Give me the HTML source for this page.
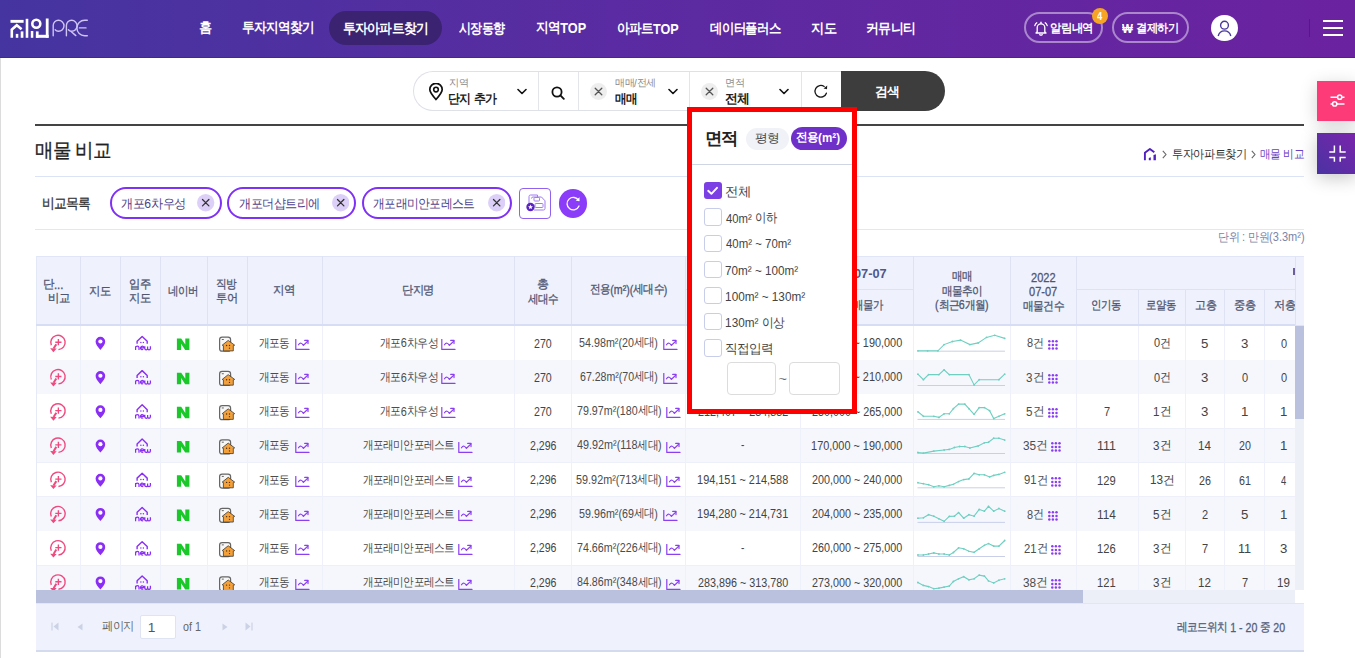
<!DOCTYPE html><html><head><meta charset="utf-8"><style>
html,body{margin:0;padding:0;}
body{width:1355px;height:658px;overflow:hidden;position:relative;background:#fff;font-family:"Liberation Sans", sans-serif;}
div{box-sizing:border-box;}
</style></head><body>
<div style="position:absolute;left:0px;top:58px;width:1px;height:600px;background:#dcdcdc"></div>
<div style="position:absolute;left:0px;top:0px;width:1355px;height:58px;background:linear-gradient(90deg,#4535a0 0%,#5a2ba2 45%,#6b22a0 100%)"></div>
<div style="position:absolute;left:0px;top:57px;width:1355px;height:1px;background:rgba(40,20,120,0.3)"></div>
<svg style="position:absolute;left:0px;top:0px;" width="100" height="58" viewBox="0 0 100 58">
<g fill="#fff">
<rect x="10.5" y="19.9" width="13.1" height="2.9"/>
<rect x="25.7" y="18.8" width="2.6" height="19" />
<rect x="30.8" y="31" width="2.5" height="6.8"/>
<rect x="45.8" y="18.5" width="2.8" height="19.3"/>
<rect x="35.9" y="34.8" width="12.7" height="3"/>
<rect x="35.9" y="31.4" width="2.7" height="6.4"/>
<rect x="15.8" y="33.9" width="2.5" height="3.9"/>
<rect x="20.7" y="31.4" width="2.7" height="6.4"/>
</g>
<path d="M11.8 37.8 V29.6 L16.8 25.2 L21.6 29.2" fill="none" stroke="#fff" stroke-width="2.6"/>
<circle cx="36.3" cy="23.8" r="4" fill="none" stroke="#fff" stroke-width="2.6"/>
<g fill="none" stroke="#cfc4f2" stroke-width="1.4" stroke-linecap="round">
<path d="M53.2 35.7 V25.5 A5.2 5.2 0 0 1 58.5 20.3 A5.5 5.5 0 0 1 58.5 31.3 A4 4 0 0 1 55.2 29.8"/>
<path d="M66.4 35.7 V25.5 A5.2 5.2 0 0 1 71.6 20.3 A5.5 5.5 0 0 1 71.6 31.3 A4 4 0 0 1 68.4 29.8 M70.8 31.2 L75.8 35.6"/>
<path d="M87.3 20.3 H84.6 A7.7 7.7 0 0 0 84.6 35.7 H87.3 M79.4 27.9 H86"/>
</g></svg>
<div style="position:absolute;left:329px;top:11px;width:113px;height:34px;background:#3b2372;border-radius:17px"></div>
<div style="position:absolute;left:199.00px;top:18.40px;white-space:nowrap;font-size:14px;line-height:18px;color:#fff;font-weight:bold;transform-origin:1.00px 50%;transform:scaleX(0.9417);--w:13;--s:0.9417;"><span style="letter-spacing:-0.700px">홈</span></div>
<div style="position:absolute;left:241.70px;top:18.40px;white-space:nowrap;font-size:14px;line-height:18px;color:#fff;font-weight:bold;transform-origin:1.00px 50%;transform:scaleX(0.9013);--w:80;--s:0.9013;"><span style="letter-spacing:-0.700px">투자지역찾기</span></div>
<div style="position:absolute;left:343.00px;top:18.90px;white-space:nowrap;font-size:14px;line-height:18px;color:#fff;font-weight:bold;transform-origin:1.00px 50%;transform:scaleX(0.9121);--w:93;--s:0.9121;"><span style="letter-spacing:-0.700px">투자아파트찾기</span></div>
<div style="position:absolute;left:458.50px;top:18.90px;white-space:nowrap;font-size:14px;line-height:18px;color:#fff;font-weight:bold;transform-origin:0.00px 50%;transform:scaleX(0.8611);--w:53;--s:0.8611;"><span style="letter-spacing:-0.700px">시장동향</span></div>
<div style="position:absolute;left:536.00px;top:18.40px;white-space:nowrap;font-size:14px;line-height:18px;color:#fff;font-weight:bold;transform-origin:1.00px 50%;transform:scaleX(0.9074);--w:55;--s:0.9074;"><span style="letter-spacing:-0.700px">지역</span><span style="position:relative;top:0.07em;letter-spacing:0.000px">TOP</span></div>
<div style="position:absolute;left:616.60px;top:18.90px;white-space:nowrap;font-size:14px;line-height:18px;color:#fff;font-weight:bold;transform-origin:1.00px 50%;transform:scaleX(0.9015);--w:68;--s:0.9015;"><span style="letter-spacing:-0.700px">아파트</span><span style="position:relative;top:0.07em;letter-spacing:0.000px">TOP</span></div>
<div style="position:absolute;left:709.70px;top:18.90px;white-space:nowrap;font-size:14px;line-height:18px;color:#fff;font-weight:bold;transform-origin:0.00px 50%;transform:scaleX(0.8837);--w:80;--s:0.8837;"><span style="letter-spacing:-0.700px">데이터플러스</span></div>
<div style="position:absolute;left:811.00px;top:18.90px;white-space:nowrap;font-size:14px;line-height:18px;color:#fff;font-weight:bold;transform-origin:1.00px 50%;transform:scaleX(0.9440);--w:27;--s:0.9440;"><span style="letter-spacing:-0.700px">지도</span></div>
<div style="position:absolute;left:865.60px;top:18.90px;white-space:nowrap;font-size:14px;line-height:18px;color:#fff;font-weight:bold;transform-origin:1.00px 50%;transform:scaleX(0.9235);--w:53;--s:0.9235;"><span style="letter-spacing:-0.700px">커뮤니티</span></div>
<div style="position:absolute;left:1024px;top:12px;width:79px;height:31px;border:2px solid rgba(255,255,255,0.45);border-radius:16px"></div>
<div style="position:absolute;left:1112px;top:12px;width:77px;height:31px;border:2px solid rgba(255,255,255,0.45);border-radius:16px"></div>
<svg style="position:absolute;left:1033px;top:20px;" width="16" height="16" viewBox="0 0 16 16"><g fill="none" stroke="#fff" stroke-width="1.3" stroke-linecap="round" stroke-linejoin="round"><path d="M4.2 11.8 V7.6 A3.8 3.8 0 0 1 11.8 7.6 V11.8 L13 13 H3 Z"/><path d="M8 2.2 V3.6"/><path d="M6.8 14.4 A1.3 1.3 0 0 0 9.2 14.4"/><path d="M1.8 5.6 Q2.4 3.8 3.8 2.8 M14.2 5.6 Q13.6 3.8 12.2 2.8"/></g></svg>
<div style="position:absolute;left:1050.00px;top:19.50px;white-space:nowrap;font-size:12px;line-height:16px;color:#fff;font-weight:bold;transform-origin:1.00px 50%;transform:scaleX(0.9477);--w:46;--s:0.9477;"><span style="letter-spacing:-0.600px">알림내역</span></div>
<div style="position:absolute;left:1092px;top:8px;width:16px;height:16px;background:#f6a425;border-radius:8px"></div>
<div style="position:absolute;left:1097.20px;top:10.00px;white-space:nowrap;font-size:10px;line-height:14px;color:#fff;font-weight:bold;transform-origin:0.00px 50%;transform:scaleX(0.9333);--w:6;--s:0.9333;"><span style="letter-spacing:0.000px">4</span></div>
<div style="position:absolute;left:1122.00px;top:20.50px;white-space:nowrap;font-size:12px;line-height:16px;color:#fff;font-weight:bold;transform-origin:0.00px 50%;transform:scaleX(0.9583);--w:11;--s:0.9583;"><span style="letter-spacing:0.000px">₩</span></div>
<div style="position:absolute;left:1135.80px;top:19.50px;white-space:nowrap;font-size:12px;line-height:16px;color:#fff;font-weight:bold;transform-origin:1.00px 50%;transform:scaleX(0.9364);--w:46;--s:0.9364;"><span style="letter-spacing:-0.600px">결제하기</span></div>
<div style="position:absolute;left:1211px;top:14.6px;width:26.7px;height:26.7px;background:#fff;border-radius:50%"></div>
<svg style="position:absolute;left:1211px;top:14.6px;" width="27" height="27" viewBox="0 0 27 27"><circle cx="13.5" cy="10.2" r="3.9" fill="none" stroke="#4a3a9c" stroke-width="1.4"/><path d="M7.2 21 A6.5 6.8 0 0 1 19.8 21" fill="none" stroke="#4a3a9c" stroke-width="1.4"/></svg>
<div style="position:absolute;left:1308.5px;top:19px;width:1.5px;height:18px;background:#521a85"></div>
<div style="position:absolute;left:1323px;top:19.6px;width:20px;height:2px;background:#fff"></div>
<div style="position:absolute;left:1323px;top:27.2px;width:20px;height:2px;background:#fff"></div>
<div style="position:absolute;left:1323px;top:34.2px;width:20px;height:2px;background:#fff"></div>
<div style="position:absolute;left:413px;top:71px;width:430px;height:40px;border:1px solid #dfe1e8;border-right:none;border-radius:20px 0 0 20px;background:#fff"></div>
<div style="position:absolute;left:841px;top:71px;width:104px;height:40px;background:#3d3d3d;border-radius:0 20px 20px 0"></div>
<div style="position:absolute;left:538px;top:72px;width:1px;height:38px;background:#e3e5ea"></div>
<div style="position:absolute;left:578px;top:72px;width:1px;height:38px;background:#e3e5ea"></div>
<div style="position:absolute;left:689px;top:72px;width:1px;height:38px;background:#e3e5ea"></div>
<div style="position:absolute;left:801px;top:72px;width:1px;height:38px;background:#e3e5ea"></div>
<svg style="position:absolute;left:428px;top:83px;" width="16" height="18" viewBox="0 0 16 18"><path d="M8 16.5 C4 12 1.8 9 1.8 6.5 A6.2 6.2 0 0 1 14.2 6.5 C14.2 9 12 12 8 16.5 Z" fill="none" stroke="#111" stroke-width="1.7" stroke-linejoin="round"/><circle cx="8" cy="6.6" r="2.3" fill="none" stroke="#111" stroke-width="1.6"/></svg>
<div style="position:absolute;left:448.70px;top:76.00px;white-space:nowrap;font-size:10px;line-height:14px;color:#8a8a8a;font-weight:normal;transform-origin:1.00px 50%;transform:scaleX(1.0167);--w:19;--s:1.0167;"><span style="letter-spacing:-0.500px">지역</span></div>
<div style="position:absolute;left:448.40px;top:89.50px;white-space:nowrap;font-size:13px;line-height:17px;color:#222;font-weight:bold;transform-origin:1.00px 50%;transform:scaleX(0.9189);--w:53;--s:0.9189;"><span style="letter-spacing:-0.650px">단지</span><span style="letter-spacing:0.000px"> </span><span style="letter-spacing:-0.650px">추가</span></div>
<svg style="position:absolute;left:516.5px;top:88px;" width="10" height="7" viewBox="0 0 10 7"><path d="M1 1.5 L5 5.5 L9 1.5" fill="none" stroke="#111" stroke-width="1.6" stroke-linecap="round" stroke-linejoin="round"/></svg>
<svg style="position:absolute;left:550.5px;top:85.5px;" width="14" height="14" viewBox="0 0 14 14"><circle cx="6" cy="6" r="4.6" fill="none" stroke="#111" stroke-width="1.8"/><path d="M9.4 9.4 L12.8 12.8" stroke="#111" stroke-width="1.9" stroke-linecap="round"/></svg>
<svg style="position:absolute;left:589.5px;top:82.5px;" width="17.0" height="17.0" viewBox="0 0 17.0 17.0"><circle cx="8.5" cy="8.5" r="8.5" fill="#eeeeee"/><path d="M5.2 5.2 L11.8 11.8 M11.8 5.2 L5.2 11.8" stroke="#555" stroke-width="1.3" stroke-linecap="round"/></svg>
<div style="position:absolute;left:614.80px;top:76.00px;white-space:nowrap;font-size:10px;line-height:14px;color:#8a8a8a;font-weight:normal;transform-origin:0.00px 50%;transform:scaleX(1.0050);--w:41;--s:1.0050;"><span style="letter-spacing:-0.500px">매매</span><span style="position:relative;top:0.07em;letter-spacing:0.000px">/</span><span style="letter-spacing:-0.500px">전세</span></div>
<div style="position:absolute;left:614.80px;top:89.50px;white-space:nowrap;font-size:13px;line-height:17px;color:#222;font-weight:bold;transform-origin:0.00px 50%;transform:scaleX(0.9000);--w:25;--s:0.9000;"><span style="letter-spacing:-0.650px">매매</span></div>
<svg style="position:absolute;left:667.5px;top:88px;" width="10" height="7" viewBox="0 0 10 7"><path d="M1 1.5 L5 5.5 L9 1.5" fill="none" stroke="#111" stroke-width="1.6" stroke-linecap="round" stroke-linejoin="round"/></svg>
<svg style="position:absolute;left:701.0px;top:82.5px;" width="17.0" height="17.0" viewBox="0 0 17.0 17.0"><circle cx="8.5" cy="8.5" r="8.5" fill="#eeeeee"/><path d="M5.2 5.2 L11.8 11.8 M11.8 5.2 L5.2 11.8" stroke="#555" stroke-width="1.3" stroke-linecap="round"/></svg>
<div style="position:absolute;left:724.50px;top:76.00px;white-space:nowrap;font-size:10px;line-height:14px;color:#8a8a8a;font-weight:normal;transform-origin:1.00px 50%;transform:scaleX(1.0167);--w:19;--s:1.0167;"><span style="letter-spacing:-0.500px">면적</span></div>
<div style="position:absolute;left:724.50px;top:89.50px;white-space:nowrap;font-size:13px;line-height:17px;color:#222;font-weight:bold;transform-origin:1.00px 50%;transform:scaleX(0.9870);--w:25;--s:0.9870;"><span style="letter-spacing:-0.650px">전체</span></div>
<svg style="position:absolute;left:779px;top:88px;" width="10" height="7" viewBox="0 0 10 7"><path d="M1 1.5 L5 5.5 L9 1.5" fill="none" stroke="#111" stroke-width="1.6" stroke-linecap="round" stroke-linejoin="round"/></svg>
<svg style="position:absolute;left:806px;top:80px;" width="30" height="24" viewBox="0 0 30 24"><path d="M18.2 6.5 A5.85 5.85 0 1 0 20.4 13.2" fill="none" stroke="#1a1a1a" stroke-width="1.3" stroke-linecap="round"/><path d="M21.2 5.6 L21 9.2 L17.6 8.4 Z" fill="#1a1a1a"/></svg>
<div style="position:absolute;left:875.30px;top:82.50px;white-space:nowrap;font-size:13px;line-height:17px;color:#fff;font-weight:bold;transform-origin:1.00px 50%;transform:scaleX(0.9870);--w:25;--s:0.9870;"><span style="letter-spacing:-0.650px">검색</span></div>
<div style="position:absolute;left:35px;top:123.5px;width:1269px;height:2px;background:#444"></div>
<div style="position:absolute;left:1316.5px;top:81px;width:40px;height:40px;background:#fd3b79;box-shadow:0 4px 18px rgba(0,0,0,0.18)"></div>
<svg style="position:absolute;left:1316.5px;top:81px;" width="40" height="40" viewBox="0 0 40 40"><g stroke="#fff" stroke-width="1.5" fill="none"><path d="M13.5 16.2 H27.5 M13.5 22.9 H27.5"/><circle cx="22.7" cy="16.2" r="2.1" fill="#fd3b79"/><circle cx="17.7" cy="22.9" r="2.1" fill="#fd3b79"/></g></svg>
<div style="position:absolute;left:1316.5px;top:133px;width:40px;height:41px;background:linear-gradient(45deg,#4a33a3,#7b24ab);box-shadow:0 4px 18px rgba(0,0,0,0.22)"></div>
<svg style="position:absolute;left:1316.5px;top:133px;" width="40" height="41" viewBox="0 0 40 41"><g stroke="#fff" stroke-width="1.5" fill="none"><path d="M17.4 12.5 V18.9 H12.3 M23.2 12.5 V18.9 H28.7 M17.4 28.8 V24.4 H12.3 M23.2 28.8 V24.4 H28.7"/></g></svg>
<div style="position:absolute;left:35.40px;top:138.00px;white-space:nowrap;font-size:20px;line-height:24px;color:#222;font-weight:normal;-webkit-text-stroke:0.3px currentColor;transform-origin:1.00px 50%;transform:scaleX(0.9235);--w:82;--s:0.9235;"><span style="letter-spacing:-1.000px">매물</span><span style="letter-spacing:0.000px"> </span><span style="letter-spacing:-1.000px">비교</span></div>
<div style="position:absolute;left:35px;top:176px;width:1269px;height:1px;background:#dde3f6"></div>
<svg style="position:absolute;left:1138px;top:142px;" width="24" height="24" viewBox="0 0 24 24"><path d="M6.9 18.3 V10.7 L11.9 6.9 L16.3 10.3" fill="none" stroke="#4f1fc0" stroke-width="1.9" stroke-linejoin="round"/><path d="M10.8 16 L12.8 15.2 V18.3 H10.8 Z M15.5 13 L17.9 12.2 V18.3 H15.5 Z" fill="#4f1fc0"/></svg>
<svg style="position:absolute;left:1162px;top:150px;" width="5" height="9" viewBox="0 0 5 9"><path d="M0.8 0.8 L4 4.5 L0.8 8.2" fill="none" stroke="#666" stroke-width="1.1"/></svg>
<div style="position:absolute;left:1171.90px;top:145.50px;white-space:nowrap;font-size:12px;line-height:16px;color:#333;font-weight:normal;transform-origin:1.00px 50%;transform:scaleX(0.9351);--w:80;--s:0.9351;"><span style="letter-spacing:-0.600px">투자아파트찾기</span></div>
<svg style="position:absolute;left:1250.5px;top:150px;" width="5" height="9" viewBox="0 0 5 9"><path d="M0.8 0.8 L4 4.5 L0.8 8.2" fill="none" stroke="#666" stroke-width="1.1"/></svg>
<div style="position:absolute;left:1260.30px;top:145.50px;white-space:nowrap;font-size:12px;line-height:16px;color:#6a3fc4;font-weight:normal;transform-origin:1.00px 50%;transform:scaleX(0.8917);--w:49;--s:0.8917;"><span style="letter-spacing:-0.600px">매물</span><span style="letter-spacing:0.000px"> </span><span style="letter-spacing:-0.600px">비교</span></div>
<div style="position:absolute;left:41.80px;top:194.00px;white-space:nowrap;font-size:14px;line-height:18px;color:#333;font-weight:normal;-webkit-text-stroke:0.3px currentColor;transform-origin:1.00px 50%;transform:scaleX(0.9115);--w:53;--s:0.9115;"><span style="letter-spacing:-0.700px">비교목록</span></div>
<div style="position:absolute;left:109.7px;top:187px;width:111.89999999999999px;height:32px;border:2px solid #8031f6;border-radius:16px"></div>
<div style="position:absolute;left:121.20px;top:194.50px;white-space:nowrap;font-size:13px;line-height:17px;color:#4e3f8c;font-weight:normal;transform-origin:1.00px 50%;transform:scaleX(0.9388);--w:69;--s:0.9388;"><span style="letter-spacing:-0.650px">개포</span><span style="position:relative;top:0.07em;letter-spacing:0.000px">6</span><span style="letter-spacing:-0.650px">차우성</span></div>
<svg style="position:absolute;left:197.3px;top:194.3px;" width="17.4" height="17.4" viewBox="0 0 17.4 17.4"><circle cx="8.7" cy="8.7" r="8.7" fill="#ddd0f8"/><path d="M5.499999999999999 5.499999999999999 L11.899999999999999 11.899999999999999 M11.899999999999999 5.499999999999999 L5.499999999999999 11.899999999999999" stroke="#333" stroke-width="1.3" stroke-linecap="round"/></svg>
<div style="position:absolute;left:227px;top:187px;width:129px;height:32px;border:2px solid #8031f6;border-radius:16px"></div>
<div style="position:absolute;left:238.60px;top:194.50px;white-space:nowrap;font-size:13px;line-height:17px;color:#4e3f8c;font-weight:normal;transform-origin:1.00px 50%;transform:scaleX(0.9345);--w:86;--s:0.9345;"><span style="letter-spacing:-0.650px">개포더샵트리에</span></div>
<svg style="position:absolute;left:331.6px;top:194.3px;" width="17.4" height="17.4" viewBox="0 0 17.4 17.4"><circle cx="8.7" cy="8.7" r="8.7" fill="#ddd0f8"/><path d="M5.499999999999999 5.499999999999999 L11.899999999999999 11.899999999999999 M11.899999999999999 5.499999999999999 L5.499999999999999 11.899999999999999" stroke="#333" stroke-width="1.3" stroke-linecap="round"/></svg>
<div style="position:absolute;left:361.6px;top:187px;width:150.0px;height:32px;border:2px solid #8031f6;border-radius:16px"></div>
<div style="position:absolute;left:372.70px;top:194.50px;white-space:nowrap;font-size:13px;line-height:17px;color:#4e3f8c;font-weight:normal;transform-origin:1.00px 50%;transform:scaleX(0.9100);--w:111;--s:0.9100;"><span style="letter-spacing:-0.650px">개포래미안포레스트</span></div>
<svg style="position:absolute;left:487.8px;top:194.3px;" width="17.4" height="17.4" viewBox="0 0 17.4 17.4"><circle cx="8.7" cy="8.7" r="8.7" fill="#ddd0f8"/><path d="M5.499999999999999 5.499999999999999 L11.899999999999999 11.899999999999999 M11.899999999999999 5.499999999999999 L5.499999999999999 11.899999999999999" stroke="#333" stroke-width="1.3" stroke-linecap="round"/></svg>
<div style="position:absolute;left:519px;top:188px;width:32px;height:31px;border:1.5px solid #9062ee;border-radius:4px"></div>
<svg style="position:absolute;left:519px;top:188px;" width="32" height="31" viewBox="0 0 32 31"><g fill="none" stroke="#a27cf0" stroke-width="1"><path d="M10 16 V8.5 A1.5 1.5 0 0 1 11.5 7 H18.5 V9"/><path d="M12.5 10.5 A1.5 1.5 0 0 1 14 9 H22.5 L26 12.8 V20.5 A1.5 1.5 0 0 1 24.5 22 H15"/><rect x="15" y="9.5" width="5.5" height="3.5" rx="0.8"/><rect x="16" y="15.5" width="8" height="4" rx="0.8"/></g><circle cx="11.5" cy="19" r="4.2" fill="#5b22c4"/><path d="M11.5 16.6 L12.25 18.2 L13.9 18.35 L12.65 19.45 L13 21.1 L11.5 20.25 L10 21.1 L10.35 19.45 L9.1 18.35 L10.75 18.2 Z" fill="#fff"/></svg>
<div style="position:absolute;left:558.5px;top:189.3px;width:28.5px;height:28.5px;background:#8a3cf8;border-radius:50%"></div>
<svg style="position:absolute;left:558.5px;top:189.3px;" width="28.5" height="28.5" viewBox="0 0 28.5 28.5"><path d="M19.6 11.5 A6.2 6.2 0 1 0 20 17" fill="none" stroke="#fff" stroke-width="1.3" stroke-linecap="round"/><path d="M20.5 8.2 L20.5 12.2 L16.6 11.6 Z" fill="#fff"/></svg>
<div style="position:absolute;left:35px;top:229px;width:1269px;height:1px;background:#e2e7f7"></div>
<div style="position:absolute;left:1217.80px;top:228.50px;white-space:nowrap;font-size:12px;line-height:16px;color:#7a84a6;font-weight:normal;transform-origin:1.00px 50%;transform:scaleX(0.9172);--w:94;--s:0.9172;"><span style="letter-spacing:-0.600px">단위</span><span style="position:relative;top:0.07em;letter-spacing:0.000px"> : </span><span style="letter-spacing:-0.600px">만원</span><span style="position:relative;top:0.07em;letter-spacing:0.000px">(3.3m²)</span></div>
<div style="position:absolute;left:35.5px;top:256px;width:1268.5px;height:68.30000000000001px;background:#eff2fc;border-top:1px solid #e0e5f7"></div>
<div style="position:absolute;left:80.4px;top:256px;width:1px;height:68.30000000000001px;background:#dde3f5"></div>
<div style="position:absolute;left:119.7px;top:256px;width:1px;height:68.30000000000001px;background:#dde3f5"></div>
<div style="position:absolute;left:159.5px;top:256px;width:1px;height:68.30000000000001px;background:#dde3f5"></div>
<div style="position:absolute;left:207.4px;top:256px;width:1px;height:68.30000000000001px;background:#dde3f5"></div>
<div style="position:absolute;left:246.5px;top:256px;width:1px;height:68.30000000000001px;background:#dde3f5"></div>
<div style="position:absolute;left:321.5px;top:256px;width:1px;height:68.30000000000001px;background:#dde3f5"></div>
<div style="position:absolute;left:514.4px;top:256px;width:1px;height:68.30000000000001px;background:#dde3f5"></div>
<div style="position:absolute;left:571.4px;top:256px;width:1px;height:68.30000000000001px;background:#dde3f5"></div>
<div style="position:absolute;left:685.3px;top:256px;width:1px;height:68.30000000000001px;background:#dde3f5"></div>
<div style="position:absolute;left:799.6px;top:288.5px;width:1px;height:35.80000000000001px;background:#dde3f5"></div>
<div style="position:absolute;left:913.3px;top:256px;width:1px;height:68.30000000000001px;background:#dde3f5"></div>
<div style="position:absolute;left:1010px;top:256px;width:1px;height:68.30000000000001px;background:#dde3f5"></div>
<div style="position:absolute;left:1075.5px;top:256px;width:1px;height:68.30000000000001px;background:#dde3f5"></div>
<div style="position:absolute;left:1137.6px;top:288.5px;width:1px;height:35.80000000000001px;background:#dde3f5"></div>
<div style="position:absolute;left:1185.4px;top:288.5px;width:1px;height:35.80000000000001px;background:#dde3f5"></div>
<div style="position:absolute;left:1224.4px;top:288.5px;width:1px;height:35.80000000000001px;background:#dde3f5"></div>
<div style="position:absolute;left:1264.3px;top:288.5px;width:1px;height:35.80000000000001px;background:#dde3f5"></div>
<div style="position:absolute;left:1294.7px;top:256px;width:1px;height:68.30000000000001px;background:#dde3f5"></div>
<div style="position:absolute;left:35.5px;top:256px;width:1px;height:68.30000000000001px;background:#e3e8f7"></div>
<div style="position:absolute;left:685.3px;top:288.5px;width:228px;height:1px;background:#dde3f5"></div>
<div style="position:absolute;left:1075.5px;top:288.5px;width:219.2px;height:1px;background:#dde3f5"></div>
<div style="position:absolute;left:35.5px;top:324.3px;width:1268.5px;height:2px;background:#d6ddf5"></div>
<div style="position:absolute;left:42.70px;top:276.00px;white-space:nowrap;font-size:12px;line-height:16px;color:#4f5672;font-weight:normal;-webkit-text-stroke:0.3px currentColor;transform-origin:1.00px 50%;transform:scaleX(0.9550);--w:21;--s:0.9550;"><span style="letter-spacing:-0.600px">단</span><span style="position:relative;top:0.07em;letter-spacing:0.000px">...</span></div>
<div style="position:absolute;left:47.50px;top:290.20px;white-space:nowrap;font-size:12px;line-height:16px;color:#4f5672;font-weight:normal;-webkit-text-stroke:0.3px currentColor;transform-origin:1.00px 50%;transform:scaleX(0.9429);--w:23;--s:0.9429;"><span style="letter-spacing:-0.600px">비교</span></div>
<div style="position:absolute;left:88.70px;top:282.70px;white-space:nowrap;font-size:12px;line-height:16px;color:#4f5672;font-weight:normal;-webkit-text-stroke:0.3px currentColor;transform-origin:1.00px 50%;transform:scaleX(0.9476);--w:23;--s:0.9476;"><span style="letter-spacing:-0.600px">지도</span></div>
<div style="position:absolute;left:128.90px;top:276.00px;white-space:nowrap;font-size:12px;line-height:16px;color:#4f5672;font-weight:normal;-webkit-text-stroke:0.3px currentColor;transform-origin:1.00px 50%;transform:scaleX(0.9381);--w:23;--s:0.9381;"><span style="letter-spacing:-0.600px">입주</span></div>
<div style="position:absolute;left:128.90px;top:290.20px;white-space:nowrap;font-size:12px;line-height:16px;color:#4f5672;font-weight:normal;-webkit-text-stroke:0.3px currentColor;transform-origin:1.00px 50%;transform:scaleX(0.9381);--w:23;--s:0.9381;"><span style="letter-spacing:-0.600px">지도</span></div>
<div style="position:absolute;left:168.30px;top:282.70px;white-space:nowrap;font-size:12px;line-height:16px;color:#4f5672;font-weight:normal;-webkit-text-stroke:0.3px currentColor;transform-origin:0.00px 50%;transform:scaleX(0.8765);--w:34;--s:0.8765;"><span style="letter-spacing:-0.600px">네이버</span></div>
<div style="position:absolute;left:216.20px;top:276.00px;white-space:nowrap;font-size:12px;line-height:16px;color:#4f5672;font-weight:normal;-webkit-text-stroke:0.3px currentColor;transform-origin:1.00px 50%;transform:scaleX(0.8909);--w:23;--s:0.8909;"><span style="letter-spacing:-0.600px">직방</span></div>
<div style="position:absolute;left:216.20px;top:290.20px;white-space:nowrap;font-size:12px;line-height:16px;color:#4f5672;font-weight:normal;-webkit-text-stroke:0.3px currentColor;transform-origin:1.00px 50%;transform:scaleX(0.9333);--w:23;--s:0.9333;"><span style="letter-spacing:-0.600px">투어</span></div>
<div style="position:absolute;left:273.20px;top:281.50px;white-space:nowrap;font-size:12px;line-height:16px;color:#4f5672;font-weight:normal;-webkit-text-stroke:0.3px currentColor;transform-origin:1.00px 50%;transform:scaleX(0.9571);--w:23;--s:0.9571;"><span style="letter-spacing:-0.600px">지역</span></div>
<div style="position:absolute;left:402.00px;top:281.50px;white-space:nowrap;font-size:12px;line-height:16px;color:#4f5672;font-weight:normal;-webkit-text-stroke:0.3px currentColor;transform-origin:1.00px 50%;transform:scaleX(0.9333);--w:34;--s:0.9333;"><span style="letter-spacing:-0.600px">단지명</span></div>
<div style="position:absolute;left:537.30px;top:276.00px;white-space:nowrap;font-size:12px;line-height:16px;color:#4f5672;font-weight:normal;-webkit-text-stroke:0.3px currentColor;transform-origin:1.00px 50%;transform:scaleX(1.0000);--w:11;--s:1.0000;"><span style="letter-spacing:-0.600px">총</span></div>
<div style="position:absolute;left:528.20px;top:290.50px;white-space:nowrap;font-size:12px;line-height:16px;color:#4f5672;font-weight:normal;-webkit-text-stroke:0.3px currentColor;transform-origin:0.00px 50%;transform:scaleX(0.8794);--w:34;--s:0.8794;"><span style="letter-spacing:-0.600px">세대수</span></div>
<div style="position:absolute;left:589.70px;top:280.80px;white-space:nowrap;font-size:12px;line-height:16px;color:#4f5672;font-weight:normal;-webkit-text-stroke:0.3px currentColor;transform-origin:1.00px 50%;transform:scaleX(0.8860);--w:87;--s:0.8860;"><span style="letter-spacing:-0.600px">전용</span><span style="position:relative;top:0.07em;letter-spacing:0.000px">(m²)(</span><span style="letter-spacing:-0.600px">세대수</span><span style="position:relative;top:0.07em;letter-spacing:0.000px">)</span></div>
<div style="position:absolute;left:721.00px;top:297.30px;white-space:nowrap;font-size:12px;line-height:16px;color:#4f5672;font-weight:normal;-webkit-text-stroke:0.3px currentColor;transform-origin:1.00px 50%;transform:scaleX(0.9111);--w:46;--s:0.9111;"><span style="letter-spacing:-0.600px">실거래가</span></div>
<div style="position:absolute;left:853.50px;top:264.80px;white-space:nowrap;font-size:13px;line-height:17px;color:#50578f;font-weight:bold;transform-origin:0.00px 50%;transform:scaleX(0.9818);--w:33;--s:0.9818;"><span style="letter-spacing:0.000px">07-07</span></div>
<div style="position:absolute;left:853.00px;top:297.30px;white-space:nowrap;font-size:12px;line-height:16px;color:#4f5672;font-weight:normal;-webkit-text-stroke:0.3px currentColor;transform-origin:0.00px 50%;transform:scaleX(0.8686);--w:34;--s:0.8686;"><span style="letter-spacing:-0.600px">매물가</span></div>
<div style="position:absolute;left:952.20px;top:268.30px;white-space:nowrap;font-size:12px;line-height:16px;color:#4f5672;font-weight:normal;-webkit-text-stroke:0.3px currentColor;transform-origin:0.00px 50%;transform:scaleX(0.8818);--w:23;--s:0.8818;"><span style="letter-spacing:-0.600px">매매</span></div>
<div style="position:absolute;left:941.90px;top:283.00px;white-space:nowrap;font-size:12px;line-height:16px;color:#4f5672;font-weight:normal;-webkit-text-stroke:0.3px currentColor;transform-origin:0.00px 50%;transform:scaleX(0.8867);--w:46;--s:0.8867;"><span style="letter-spacing:-0.600px">매물추이</span></div>
<div style="position:absolute;left:935.00px;top:296.50px;white-space:nowrap;font-size:12px;line-height:16px;color:#4f5672;font-weight:normal;-webkit-text-stroke:0.3px currentColor;transform-origin:0.00px 50%;transform:scaleX(0.8900);--w:60;--s:0.8900;"><span style="position:relative;top:0.07em;letter-spacing:0.000px">(</span><span style="letter-spacing:-0.600px">최근</span><span style="position:relative;top:0.07em;letter-spacing:0.000px">6</span><span style="letter-spacing:-0.600px">개월</span><span style="position:relative;top:0.07em;letter-spacing:0.000px">)</span></div>
<div style="position:absolute;left:1030.50px;top:269.80px;white-space:nowrap;font-size:12px;line-height:16px;color:#4f5672;font-weight:normal;-webkit-text-stroke:0.3px currentColor;transform-origin:0.00px 50%;transform:scaleX(0.9185);--w:27;--s:0.9185;"><span style="letter-spacing:0.000px">2022</span></div>
<div style="position:absolute;left:1028.50px;top:284.00px;white-space:nowrap;font-size:12px;line-height:16px;color:#4f5672;font-weight:normal;-webkit-text-stroke:0.3px currentColor;transform-origin:0.00px 50%;transform:scaleX(0.9194);--w:31;--s:0.9194;"><span style="letter-spacing:0.000px">07-07</span></div>
<div style="position:absolute;left:1022.90px;top:297.50px;white-space:nowrap;font-size:12px;line-height:16px;color:#4f5672;font-weight:normal;-webkit-text-stroke:0.3px currentColor;transform-origin:0.00px 50%;transform:scaleX(0.8956);--w:46;--s:0.8956;"><span style="letter-spacing:-0.600px">매물건수</span></div>
<div style="position:absolute;left:1091.00px;top:297.20px;white-space:nowrap;font-size:12px;line-height:16px;color:#4f5672;font-weight:normal;-webkit-text-stroke:0.3px currentColor;transform-origin:1.00px 50%;transform:scaleX(0.8676);--w:34;--s:0.8676;"><span style="letter-spacing:-0.600px">인기동</span></div>
<div style="position:absolute;left:1145.80px;top:297.20px;white-space:nowrap;font-size:12px;line-height:16px;color:#4f5672;font-weight:normal;-webkit-text-stroke:0.3px currentColor;transform-origin:1.00px 50%;transform:scaleX(0.8647);--w:34;--s:0.8647;"><span style="letter-spacing:-0.600px">로얄동</span></div>
<div style="position:absolute;left:1194.80px;top:297.20px;white-space:nowrap;font-size:12px;line-height:16px;color:#4f5672;font-weight:normal;-webkit-text-stroke:0.3px currentColor;transform-origin:1.00px 50%;transform:scaleX(0.9190);--w:23;--s:0.9190;"><span style="letter-spacing:-0.600px">고층</span></div>
<div style="position:absolute;left:1234.10px;top:297.20px;white-space:nowrap;font-size:12px;line-height:16px;color:#4f5672;font-weight:normal;-webkit-text-stroke:0.3px currentColor;transform-origin:1.00px 50%;transform:scaleX(0.9333);--w:23;--s:0.9333;"><span style="letter-spacing:-0.600px">중층</span></div>
<div style="position:absolute;left:1273.50px;top:297.20px;white-space:nowrap;font-size:12px;line-height:16px;color:#4f5672;font-weight:normal;-webkit-text-stroke:0.3px currentColor;transform-origin:1.00px 50%;transform:scaleX(0.9286);--w:23;--s:0.9286;"><span style="letter-spacing:-0.600px">저층</span></div>
<div style="position:absolute;left:1293px;top:268px;width:1.5px;height:7px;background:#6a5f9c"></div>
<div style="position:absolute;left:35.5px;top:326px;width:1259.2px;height:264px;overflow:hidden">
<div style="position:absolute;left:0;top:0.00px;width:1260px;height:34.53px;background:#ffffff;border-bottom:1px solid #edf0f8"></div>
<div style="position:absolute;left:0;top:34.23px;width:1260px;height:34.53px;background:#f5f7fd;border-bottom:1px solid #edf0f8"></div>
<div style="position:absolute;left:0;top:68.46px;width:1260px;height:34.53px;background:#ffffff;border-bottom:1px solid #edf0f8"></div>
<div style="position:absolute;left:0;top:102.69px;width:1260px;height:34.53px;background:#f5f7fd;border-bottom:1px solid #edf0f8"></div>
<div style="position:absolute;left:0;top:136.92px;width:1260px;height:34.53px;background:#ffffff;border-bottom:1px solid #edf0f8"></div>
<div style="position:absolute;left:0;top:171.15px;width:1260px;height:34.53px;background:#f5f7fd;border-bottom:1px solid #edf0f8"></div>
<div style="position:absolute;left:0;top:205.38px;width:1260px;height:34.53px;background:#ffffff;border-bottom:1px solid #edf0f8"></div>
<div style="position:absolute;left:0;top:239.61px;width:1260px;height:34.53px;background:#f5f7fd;border-bottom:1px solid #edf0f8"></div>
</div>
<div style="position:absolute;left:80.4px;top:326px;width:1px;height:264px;background:#eef1f9"></div>
<div style="position:absolute;left:119.7px;top:326px;width:1px;height:264px;background:#eef1f9"></div>
<div style="position:absolute;left:159.5px;top:326px;width:1px;height:264px;background:#eef1f9"></div>
<div style="position:absolute;left:207.4px;top:326px;width:1px;height:264px;background:#eef1f9"></div>
<div style="position:absolute;left:246.5px;top:326px;width:1px;height:264px;background:#eef1f9"></div>
<div style="position:absolute;left:321.5px;top:326px;width:1px;height:264px;background:#eef1f9"></div>
<div style="position:absolute;left:514.4px;top:326px;width:1px;height:264px;background:#eef1f9"></div>
<div style="position:absolute;left:571.4px;top:326px;width:1px;height:264px;background:#eef1f9"></div>
<div style="position:absolute;left:685.3px;top:326px;width:1px;height:264px;background:#eef1f9"></div>
<div style="position:absolute;left:799.6px;top:326px;width:1px;height:264px;background:#eef1f9"></div>
<div style="position:absolute;left:913.3px;top:326px;width:1px;height:264px;background:#eef1f9"></div>
<div style="position:absolute;left:1010px;top:326px;width:1px;height:264px;background:#eef1f9"></div>
<div style="position:absolute;left:1075.5px;top:326px;width:1px;height:264px;background:#eef1f9"></div>
<div style="position:absolute;left:1137.6px;top:326px;width:1px;height:264px;background:#eef1f9"></div>
<div style="position:absolute;left:1185.4px;top:326px;width:1px;height:264px;background:#eef1f9"></div>
<div style="position:absolute;left:1224.4px;top:326px;width:1px;height:264px;background:#eef1f9"></div>
<div style="position:absolute;left:1264.3px;top:326px;width:1px;height:264px;background:#eef1f9"></div>
<div style="position:absolute;left:35.5px;top:326px;width:1px;height:264px;background:#e6eaf6"></div>
<div style="position:absolute;left:259.20px;top:334.60px;white-space:nowrap;font-size:12px;line-height:16px;color:#4c4c4c;font-weight:normal;transform-origin:1.00px 50%;transform:scaleX(0.8939);--w:34;--s:0.8939;"><span style="letter-spacing:-0.600px">개포동</span></div>
<svg style="position:absolute;left:294.5px;top:338.90000000000003px;" width="15" height="11" viewBox="0 0 15 11"><g fill="none" stroke="#8b3ff0" stroke-width="1.2" stroke-linecap="round" stroke-linejoin="round"><path d="M0.8 0.4 V10.4 H14"/><path d="M3.5 5.8 Q4.6 4 5.6 4 Q6.8 4.2 8.4 6.4 L11.1 3.8 L12.9 1.8"/><path d="M9.7 1.4 H13 V4.6"/></g></svg>
<div style="position:absolute;left:379.85px;top:334.60px;white-space:nowrap;font-size:12px;line-height:16px;color:#4c4c4c;font-weight:normal;transform-origin:1.00px 50%;transform:scaleX(0.9098);--w:64;--s:0.9098;"><span style="letter-spacing:-0.600px">개포</span><span style="position:relative;top:0.07em;letter-spacing:0.000px">6</span><span style="letter-spacing:-0.600px">차우성</span></div>
<svg style="position:absolute;left:441.25px;top:338.90000000000003px;" width="15" height="11" viewBox="0 0 15 11"><g fill="none" stroke="#8b3ff0" stroke-width="1.2" stroke-linecap="round" stroke-linejoin="round"><path d="M0.8 0.4 V10.4 H14"/><path d="M3.5 5.8 Q4.6 4 5.6 4 Q6.8 4.2 8.4 6.4 L11.1 3.8 L12.9 1.8"/><path d="M9.7 1.4 H13 V4.6"/></g></svg>
<div style="position:absolute;left:534.15px;top:335.60px;white-space:nowrap;font-size:12px;line-height:16px;color:#444;font-weight:normal;transform-origin:0.00px 50%;transform:scaleX(0.8850);--w:20;--s:0.8850;"><span style="letter-spacing:0.000px">270</span></div>
<div style="position:absolute;left:579.02px;top:333.90px;white-space:nowrap;font-size:12px;line-height:16px;color:#4c4c4c;font-weight:normal;transform-origin:1.00px 50%;transform:scaleX(0.8925);--w:88;--s:0.8925;"><span style="position:relative;top:0.07em;letter-spacing:0.000px">54.98m²(20</span><span style="letter-spacing:-0.600px">세대</span><span style="position:relative;top:0.07em;letter-spacing:0.000px">)</span></div>
<svg style="position:absolute;left:662.675px;top:338.90000000000003px;" width="15" height="11" viewBox="0 0 15 11"><g fill="none" stroke="#8b3ff0" stroke-width="1.2" stroke-linecap="round" stroke-linejoin="round"><path d="M0.8 0.4 V10.4 H14"/><path d="M3.5 5.8 Q4.6 4 5.6 4 Q6.8 4.2 8.4 6.4 L11.1 3.8 L12.9 1.8"/><path d="M9.7 1.4 H13 V4.6"/></g></svg>
<div style="position:absolute;left:697.60px;top:335.10px;white-space:nowrap;font-size:12px;line-height:16px;color:#444;font-weight:normal;transform-origin:0.00px 50%;transform:scaleX(0.8980);--w:100;--s:0.8980;"><span style="letter-spacing:0.000px">212,000 ~ 234,000</span></div>
<div style="position:absolute;left:810.60px;top:335.10px;white-space:nowrap;font-size:12px;line-height:16px;color:#444;font-weight:normal;transform-origin:1.00px 50%;transform:scaleX(0.9071);--w:100;--s:0.9071;"><span style="letter-spacing:0.000px">175,000 ~ 190,000</span></div>
<div style="position:absolute;left:1027.15px;top:334.60px;white-space:nowrap;font-size:12px;line-height:16px;color:#4c4c4c;font-weight:normal;transform-origin:0.00px 50%;transform:scaleX(0.9118);--w:18;--s:0.9118;"><span style="position:relative;top:0.07em;letter-spacing:0.000px">8</span><span style="letter-spacing:-0.600px">건</span></div>
<svg style="position:absolute;left:1048.25px;top:339.70000000000005px;" width="10" height="10" viewBox="0 0 10 10"><circle cx="1.3" cy="1.3" r="1.25" fill="#8a3df2"/><circle cx="1.3" cy="4.9" r="1.25" fill="#8a3df2"/><circle cx="1.3" cy="8.5" r="1.25" fill="#8a3df2"/><circle cx="4.9" cy="1.3" r="1.25" fill="#8a3df2"/><circle cx="4.9" cy="4.9" r="1.25" fill="#8a3df2"/><circle cx="4.9" cy="8.5" r="1.25" fill="#8a3df2"/><circle cx="8.5" cy="1.3" r="1.25" fill="#8a3df2"/><circle cx="8.5" cy="4.9" r="1.25" fill="#8a3df2"/><circle cx="8.5" cy="8.5" r="1.25" fill="#8a3df2"/></svg>
<div style="position:absolute;left:1153.75px;top:334.60px;white-space:nowrap;font-size:12px;line-height:16px;color:#444;font-weight:normal;transform-origin:0.00px 50%;transform:scaleX(0.9118);--w:18;--s:0.9118;"><span style="position:relative;top:0.07em;letter-spacing:0.000px">0</span><span style="letter-spacing:-0.600px">건</span></div>
<div style="position:absolute;left:1201.25px;top:335.60px;white-space:nowrap;font-size:12px;line-height:16px;color:#444;font-weight:normal;transform-origin:1.00px 50%;transform:scaleX(1.1000);--w:7;--s:1.1000;"><span style="letter-spacing:0.000px">5</span></div>
<div style="position:absolute;left:1240.65px;top:335.60px;white-space:nowrap;font-size:12px;line-height:16px;color:#444;font-weight:normal;transform-origin:1.00px 50%;transform:scaleX(1.1000);--w:7;--s:1.1000;"><span style="letter-spacing:0.000px">3</span></div>
<div style="position:absolute;left:1280.75px;top:335.60px;white-space:nowrap;font-size:12px;line-height:16px;color:#444;font-weight:normal;transform-origin:0.00px 50%;transform:scaleX(0.9167);--w:7;--s:0.9167;"><span style="letter-spacing:0.000px">0</span></div>
<div style="position:absolute;left:259.20px;top:368.83px;white-space:nowrap;font-size:12px;line-height:16px;color:#4c4c4c;font-weight:normal;transform-origin:1.00px 50%;transform:scaleX(0.8939);--w:34;--s:0.8939;"><span style="letter-spacing:-0.600px">개포동</span></div>
<svg style="position:absolute;left:294.5px;top:373.13000000000005px;" width="15" height="11" viewBox="0 0 15 11"><g fill="none" stroke="#8b3ff0" stroke-width="1.2" stroke-linecap="round" stroke-linejoin="round"><path d="M0.8 0.4 V10.4 H14"/><path d="M3.5 5.8 Q4.6 4 5.6 4 Q6.8 4.2 8.4 6.4 L11.1 3.8 L12.9 1.8"/><path d="M9.7 1.4 H13 V4.6"/></g></svg>
<div style="position:absolute;left:379.85px;top:368.83px;white-space:nowrap;font-size:12px;line-height:16px;color:#4c4c4c;font-weight:normal;transform-origin:1.00px 50%;transform:scaleX(0.9098);--w:64;--s:0.9098;"><span style="letter-spacing:-0.600px">개포</span><span style="position:relative;top:0.07em;letter-spacing:0.000px">6</span><span style="letter-spacing:-0.600px">차우성</span></div>
<svg style="position:absolute;left:441.25px;top:373.13000000000005px;" width="15" height="11" viewBox="0 0 15 11"><g fill="none" stroke="#8b3ff0" stroke-width="1.2" stroke-linecap="round" stroke-linejoin="round"><path d="M0.8 0.4 V10.4 H14"/><path d="M3.5 5.8 Q4.6 4 5.6 4 Q6.8 4.2 8.4 6.4 L11.1 3.8 L12.9 1.8"/><path d="M9.7 1.4 H13 V4.6"/></g></svg>
<div style="position:absolute;left:534.15px;top:369.83px;white-space:nowrap;font-size:12px;line-height:16px;color:#444;font-weight:normal;transform-origin:0.00px 50%;transform:scaleX(0.8850);--w:20;--s:0.8850;"><span style="letter-spacing:0.000px">270</span></div>
<div style="position:absolute;left:580.02px;top:368.13px;white-space:nowrap;font-size:12px;line-height:16px;color:#4c4c4c;font-weight:normal;transform-origin:0.00px 50%;transform:scaleX(0.8824);--w:88;--s:0.8824;"><span style="position:relative;top:0.07em;letter-spacing:0.000px">67.28m²(70</span><span style="letter-spacing:-0.600px">세대</span><span style="position:relative;top:0.07em;letter-spacing:0.000px">)</span></div>
<svg style="position:absolute;left:662.675px;top:373.13000000000005px;" width="15" height="11" viewBox="0 0 15 11"><g fill="none" stroke="#8b3ff0" stroke-width="1.2" stroke-linecap="round" stroke-linejoin="round"><path d="M0.8 0.4 V10.4 H14"/><path d="M3.5 5.8 Q4.6 4 5.6 4 Q6.8 4.2 8.4 6.4 L11.1 3.8 L12.9 1.8"/><path d="M9.7 1.4 H13 V4.6"/></g></svg>
<div style="position:absolute;left:697.60px;top:369.33px;white-space:nowrap;font-size:12px;line-height:16px;color:#444;font-weight:normal;transform-origin:0.00px 50%;transform:scaleX(0.8980);--w:100;--s:0.8980;"><span style="letter-spacing:0.000px">212,000 ~ 234,000</span></div>
<div style="position:absolute;left:810.60px;top:369.33px;white-space:nowrap;font-size:12px;line-height:16px;color:#444;font-weight:normal;transform-origin:1.00px 50%;transform:scaleX(0.9071);--w:100;--s:0.9071;"><span style="letter-spacing:0.000px">195,000 ~ 210,000</span></div>
<div style="position:absolute;left:1026.15px;top:368.83px;white-space:nowrap;font-size:12px;line-height:16px;color:#4c4c4c;font-weight:normal;transform-origin:1.00px 50%;transform:scaleX(0.9688);--w:18;--s:0.9688;"><span style="position:relative;top:0.07em;letter-spacing:0.000px">3</span><span style="letter-spacing:-0.600px">건</span></div>
<svg style="position:absolute;left:1048.25px;top:373.93000000000006px;" width="10" height="10" viewBox="0 0 10 10"><circle cx="1.3" cy="1.3" r="1.25" fill="#8a3df2"/><circle cx="1.3" cy="4.9" r="1.25" fill="#8a3df2"/><circle cx="1.3" cy="8.5" r="1.25" fill="#8a3df2"/><circle cx="4.9" cy="1.3" r="1.25" fill="#8a3df2"/><circle cx="4.9" cy="4.9" r="1.25" fill="#8a3df2"/><circle cx="4.9" cy="8.5" r="1.25" fill="#8a3df2"/><circle cx="8.5" cy="1.3" r="1.25" fill="#8a3df2"/><circle cx="8.5" cy="4.9" r="1.25" fill="#8a3df2"/><circle cx="8.5" cy="8.5" r="1.25" fill="#8a3df2"/></svg>
<div style="position:absolute;left:1153.75px;top:368.83px;white-space:nowrap;font-size:12px;line-height:16px;color:#444;font-weight:normal;transform-origin:0.00px 50%;transform:scaleX(0.9118);--w:18;--s:0.9118;"><span style="position:relative;top:0.07em;letter-spacing:0.000px">0</span><span style="letter-spacing:-0.600px">건</span></div>
<div style="position:absolute;left:1201.25px;top:369.83px;white-space:nowrap;font-size:12px;line-height:16px;color:#444;font-weight:normal;transform-origin:1.00px 50%;transform:scaleX(1.1000);--w:7;--s:1.1000;"><span style="letter-spacing:0.000px">3</span></div>
<div style="position:absolute;left:1241.65px;top:369.83px;white-space:nowrap;font-size:12px;line-height:16px;color:#444;font-weight:normal;transform-origin:0.00px 50%;transform:scaleX(0.9167);--w:7;--s:0.9167;"><span style="letter-spacing:0.000px">0</span></div>
<div style="position:absolute;left:1280.75px;top:369.83px;white-space:nowrap;font-size:12px;line-height:16px;color:#444;font-weight:normal;transform-origin:0.00px 50%;transform:scaleX(0.9167);--w:7;--s:0.9167;"><span style="letter-spacing:0.000px">0</span></div>
<div style="position:absolute;left:259.20px;top:403.06px;white-space:nowrap;font-size:12px;line-height:16px;color:#4c4c4c;font-weight:normal;transform-origin:1.00px 50%;transform:scaleX(0.8939);--w:34;--s:0.8939;"><span style="letter-spacing:-0.600px">개포동</span></div>
<svg style="position:absolute;left:294.5px;top:407.36px;" width="15" height="11" viewBox="0 0 15 11"><g fill="none" stroke="#8b3ff0" stroke-width="1.2" stroke-linecap="round" stroke-linejoin="round"><path d="M0.8 0.4 V10.4 H14"/><path d="M3.5 5.8 Q4.6 4 5.6 4 Q6.8 4.2 8.4 6.4 L11.1 3.8 L12.9 1.8"/><path d="M9.7 1.4 H13 V4.6"/></g></svg>
<div style="position:absolute;left:379.85px;top:403.06px;white-space:nowrap;font-size:12px;line-height:16px;color:#4c4c4c;font-weight:normal;transform-origin:1.00px 50%;transform:scaleX(0.9098);--w:64;--s:0.9098;"><span style="letter-spacing:-0.600px">개포</span><span style="position:relative;top:0.07em;letter-spacing:0.000px">6</span><span style="letter-spacing:-0.600px">차우성</span></div>
<svg style="position:absolute;left:441.25px;top:407.36px;" width="15" height="11" viewBox="0 0 15 11"><g fill="none" stroke="#8b3ff0" stroke-width="1.2" stroke-linecap="round" stroke-linejoin="round"><path d="M0.8 0.4 V10.4 H14"/><path d="M3.5 5.8 Q4.6 4 5.6 4 Q6.8 4.2 8.4 6.4 L11.1 3.8 L12.9 1.8"/><path d="M9.7 1.4 H13 V4.6"/></g></svg>
<div style="position:absolute;left:534.15px;top:404.06px;white-space:nowrap;font-size:12px;line-height:16px;color:#444;font-weight:normal;transform-origin:0.00px 50%;transform:scaleX(0.8850);--w:20;--s:0.8850;"><span style="letter-spacing:0.000px">270</span></div>
<div style="position:absolute;left:576.98px;top:402.36px;white-space:nowrap;font-size:12px;line-height:16px;color:#4c4c4c;font-weight:normal;transform-origin:0.00px 50%;transform:scaleX(0.8910);--w:95;--s:0.8910;"><span style="position:relative;top:0.07em;letter-spacing:0.000px">79.97m²(180</span><span style="letter-spacing:-0.600px">세대</span><span style="position:relative;top:0.07em;letter-spacing:0.000px">)</span></div>
<svg style="position:absolute;left:665.725px;top:407.36px;" width="15" height="11" viewBox="0 0 15 11"><g fill="none" stroke="#8b3ff0" stroke-width="1.2" stroke-linecap="round" stroke-linejoin="round"><path d="M0.8 0.4 V10.4 H14"/><path d="M3.5 5.8 Q4.6 4 5.6 4 Q6.8 4.2 8.4 6.4 L11.1 3.8 L12.9 1.8"/><path d="M9.7 1.4 H13 V4.6"/></g></svg>
<div style="position:absolute;left:697.60px;top:403.56px;white-space:nowrap;font-size:12px;line-height:16px;color:#444;font-weight:normal;transform-origin:0.00px 50%;transform:scaleX(0.8980);--w:100;--s:0.8980;"><span style="letter-spacing:0.000px">212,407 ~ 234,832</span></div>
<div style="position:absolute;left:811.60px;top:403.56px;white-space:nowrap;font-size:12px;line-height:16px;color:#444;font-weight:normal;transform-origin:0.00px 50%;transform:scaleX(0.8980);--w:100;--s:0.8980;"><span style="letter-spacing:0.000px">250,000 ~ 265,000</span></div>
<div style="position:absolute;left:1026.15px;top:403.06px;white-space:nowrap;font-size:12px;line-height:16px;color:#4c4c4c;font-weight:normal;transform-origin:1.00px 50%;transform:scaleX(0.9688);--w:18;--s:0.9688;"><span style="position:relative;top:0.07em;letter-spacing:0.000px">5</span><span style="letter-spacing:-0.600px">건</span></div>
<svg style="position:absolute;left:1048.25px;top:408.16px;" width="10" height="10" viewBox="0 0 10 10"><circle cx="1.3" cy="1.3" r="1.25" fill="#8a3df2"/><circle cx="1.3" cy="4.9" r="1.25" fill="#8a3df2"/><circle cx="1.3" cy="8.5" r="1.25" fill="#8a3df2"/><circle cx="4.9" cy="1.3" r="1.25" fill="#8a3df2"/><circle cx="4.9" cy="4.9" r="1.25" fill="#8a3df2"/><circle cx="4.9" cy="8.5" r="1.25" fill="#8a3df2"/><circle cx="8.5" cy="1.3" r="1.25" fill="#8a3df2"/><circle cx="8.5" cy="4.9" r="1.25" fill="#8a3df2"/><circle cx="8.5" cy="8.5" r="1.25" fill="#8a3df2"/></svg>
<div style="position:absolute;left:1103.75px;top:404.06px;white-space:nowrap;font-size:12px;line-height:16px;color:#444;font-weight:normal;transform-origin:0.00px 50%;transform:scaleX(0.9167);--w:7;--s:0.9167;"><span style="letter-spacing:0.000px">7</span></div>
<div style="position:absolute;left:1152.75px;top:403.06px;white-space:nowrap;font-size:12px;line-height:16px;color:#444;font-weight:normal;transform-origin:1.00px 50%;transform:scaleX(0.9688);--w:18;--s:0.9688;"><span style="position:relative;top:0.07em;letter-spacing:0.000px">1</span><span style="letter-spacing:-0.600px">건</span></div>
<div style="position:absolute;left:1201.25px;top:404.06px;white-space:nowrap;font-size:12px;line-height:16px;color:#444;font-weight:normal;transform-origin:1.00px 50%;transform:scaleX(1.1000);--w:7;--s:1.1000;"><span style="letter-spacing:0.000px">3</span></div>
<div style="position:absolute;left:1240.65px;top:404.06px;white-space:nowrap;font-size:12px;line-height:16px;color:#444;font-weight:normal;transform-origin:1.00px 50%;transform:scaleX(1.1000);--w:7;--s:1.1000;"><span style="letter-spacing:0.000px">1</span></div>
<div style="position:absolute;left:1279.75px;top:404.06px;white-space:nowrap;font-size:12px;line-height:16px;color:#444;font-weight:normal;transform-origin:1.00px 50%;transform:scaleX(1.1000);--w:7;--s:1.1000;"><span style="letter-spacing:0.000px">1</span></div>
<div style="position:absolute;left:259.20px;top:437.29px;white-space:nowrap;font-size:12px;line-height:16px;color:#4c4c4c;font-weight:normal;transform-origin:1.00px 50%;transform:scaleX(0.8939);--w:34;--s:0.8939;"><span style="letter-spacing:-0.600px">개포동</span></div>
<svg style="position:absolute;left:294.5px;top:441.59000000000003px;" width="15" height="11" viewBox="0 0 15 11"><g fill="none" stroke="#8b3ff0" stroke-width="1.2" stroke-linecap="round" stroke-linejoin="round"><path d="M0.8 0.4 V10.4 H14"/><path d="M3.5 5.8 Q4.6 4 5.6 4 Q6.8 4.2 8.4 6.4 L11.1 3.8 L12.9 1.8"/><path d="M9.7 1.4 H13 V4.6"/></g></svg>
<div style="position:absolute;left:362.90px;top:437.29px;white-space:nowrap;font-size:12px;line-height:16px;color:#4c4c4c;font-weight:normal;transform-origin:1.00px 50%;transform:scaleX(0.8851);--w:103;--s:0.8851;"><span style="letter-spacing:-0.600px">개포래미안포레스트</span></div>
<svg style="position:absolute;left:458.19999999999993px;top:441.59000000000003px;" width="15" height="11" viewBox="0 0 15 11"><g fill="none" stroke="#8b3ff0" stroke-width="1.2" stroke-linecap="round" stroke-linejoin="round"><path d="M0.8 0.4 V10.4 H14"/><path d="M3.5 5.8 Q4.6 4 5.6 4 Q6.8 4.2 8.4 6.4 L11.1 3.8 L12.9 1.8"/><path d="M9.7 1.4 H13 V4.6"/></g></svg>
<div style="position:absolute;left:529.77px;top:437.79px;white-space:nowrap;font-size:12px;line-height:16px;color:#444;font-weight:normal;transform-origin:0.00px 50%;transform:scaleX(0.8817);--w:30;--s:0.8817;"><span style="letter-spacing:0.000px">2,296</span></div>
<div style="position:absolute;left:576.98px;top:436.59px;white-space:nowrap;font-size:12px;line-height:16px;color:#4c4c4c;font-weight:normal;transform-origin:0.00px 50%;transform:scaleX(0.9005);--w:94;--s:0.9005;"><span style="position:relative;top:0.07em;letter-spacing:0.000px">49.92m²(118</span><span style="letter-spacing:-0.600px">세대</span><span style="position:relative;top:0.07em;letter-spacing:0.000px">)</span></div>
<svg style="position:absolute;left:665.725px;top:441.59000000000003px;" width="15" height="11" viewBox="0 0 15 11"><g fill="none" stroke="#8b3ff0" stroke-width="1.2" stroke-linecap="round" stroke-linejoin="round"><path d="M0.8 0.4 V10.4 H14"/><path d="M3.5 5.8 Q4.6 4 5.6 4 Q6.8 4.2 8.4 6.4 L11.1 3.8 L12.9 1.8"/><path d="M9.7 1.4 H13 V4.6"/></g></svg>
<div style="position:absolute;left:740.80px;top:437.29px;white-space:nowrap;font-size:12px;line-height:16px;color:#444;font-weight:normal;transform-origin:0.00px 50%;transform:scaleX(0.8500);--w:4;--s:0.8500;"><span style="letter-spacing:0.000px">-</span></div>
<div style="position:absolute;left:810.60px;top:437.79px;white-space:nowrap;font-size:12px;line-height:16px;color:#444;font-weight:normal;transform-origin:1.00px 50%;transform:scaleX(0.9071);--w:100;--s:0.9071;"><span style="letter-spacing:0.000px">170,000 ~ 190,000</span></div>
<div style="position:absolute;left:1023.10px;top:437.29px;white-space:nowrap;font-size:12px;line-height:16px;color:#4c4c4c;font-weight:normal;transform-origin:1.00px 50%;transform:scaleX(0.9818);--w:25;--s:0.9818;"><span style="position:relative;top:0.07em;letter-spacing:0.000px">35</span><span style="letter-spacing:-0.600px">건</span></div>
<svg style="position:absolute;left:1051.3px;top:442.39000000000004px;" width="10" height="10" viewBox="0 0 10 10"><circle cx="1.3" cy="1.3" r="1.25" fill="#8a3df2"/><circle cx="1.3" cy="4.9" r="1.25" fill="#8a3df2"/><circle cx="1.3" cy="8.5" r="1.25" fill="#8a3df2"/><circle cx="4.9" cy="1.3" r="1.25" fill="#8a3df2"/><circle cx="4.9" cy="4.9" r="1.25" fill="#8a3df2"/><circle cx="4.9" cy="8.5" r="1.25" fill="#8a3df2"/><circle cx="8.5" cy="1.3" r="1.25" fill="#8a3df2"/><circle cx="8.5" cy="4.9" r="1.25" fill="#8a3df2"/><circle cx="8.5" cy="8.5" r="1.25" fill="#8a3df2"/></svg>
<div style="position:absolute;left:1096.65px;top:438.29px;white-space:nowrap;font-size:12px;line-height:16px;color:#444;font-weight:normal;transform-origin:1.00px 50%;transform:scaleX(1.0412);--w:18;--s:1.0412;"><span style="letter-spacing:0.000px">111</span></div>
<div style="position:absolute;left:1152.75px;top:437.29px;white-space:nowrap;font-size:12px;line-height:16px;color:#444;font-weight:normal;transform-origin:1.00px 50%;transform:scaleX(0.9688);--w:18;--s:0.9688;"><span style="position:relative;top:0.07em;letter-spacing:0.000px">3</span><span style="letter-spacing:-0.600px">건</span></div>
<div style="position:absolute;left:1198.20px;top:438.29px;white-space:nowrap;font-size:12px;line-height:16px;color:#444;font-weight:normal;transform-origin:1.00px 50%;transform:scaleX(0.9667);--w:13;--s:0.9667;"><span style="letter-spacing:0.000px">14</span></div>
<div style="position:absolute;left:1238.60px;top:438.29px;white-space:nowrap;font-size:12px;line-height:16px;color:#444;font-weight:normal;transform-origin:0.00px 50%;transform:scaleX(0.8923);--w:13;--s:0.8923;"><span style="letter-spacing:0.000px">20</span></div>
<div style="position:absolute;left:1279.75px;top:438.29px;white-space:nowrap;font-size:12px;line-height:16px;color:#444;font-weight:normal;transform-origin:1.00px 50%;transform:scaleX(1.1000);--w:7;--s:1.1000;"><span style="letter-spacing:0.000px">1</span></div>
<div style="position:absolute;left:259.20px;top:471.52px;white-space:nowrap;font-size:12px;line-height:16px;color:#4c4c4c;font-weight:normal;transform-origin:1.00px 50%;transform:scaleX(0.8939);--w:34;--s:0.8939;"><span style="letter-spacing:-0.600px">개포동</span></div>
<svg style="position:absolute;left:294.5px;top:475.82px;" width="15" height="11" viewBox="0 0 15 11"><g fill="none" stroke="#8b3ff0" stroke-width="1.2" stroke-linecap="round" stroke-linejoin="round"><path d="M0.8 0.4 V10.4 H14"/><path d="M3.5 5.8 Q4.6 4 5.6 4 Q6.8 4.2 8.4 6.4 L11.1 3.8 L12.9 1.8"/><path d="M9.7 1.4 H13 V4.6"/></g></svg>
<div style="position:absolute;left:362.90px;top:471.52px;white-space:nowrap;font-size:12px;line-height:16px;color:#4c4c4c;font-weight:normal;transform-origin:1.00px 50%;transform:scaleX(0.8851);--w:103;--s:0.8851;"><span style="letter-spacing:-0.600px">개포래미안포레스트</span></div>
<svg style="position:absolute;left:458.19999999999993px;top:475.82px;" width="15" height="11" viewBox="0 0 15 11"><g fill="none" stroke="#8b3ff0" stroke-width="1.2" stroke-linecap="round" stroke-linejoin="round"><path d="M0.8 0.4 V10.4 H14"/><path d="M3.5 5.8 Q4.6 4 5.6 4 Q6.8 4.2 8.4 6.4 L11.1 3.8 L12.9 1.8"/><path d="M9.7 1.4 H13 V4.6"/></g></svg>
<div style="position:absolute;left:529.77px;top:472.02px;white-space:nowrap;font-size:12px;line-height:16px;color:#444;font-weight:normal;transform-origin:0.00px 50%;transform:scaleX(0.8817);--w:30;--s:0.8817;"><span style="letter-spacing:0.000px">2,296</span></div>
<div style="position:absolute;left:575.98px;top:470.82px;white-space:nowrap;font-size:12px;line-height:16px;color:#4c4c4c;font-weight:normal;transform-origin:1.00px 50%;transform:scaleX(0.9005);--w:95;--s:0.9005;"><span style="position:relative;top:0.07em;letter-spacing:0.000px">59.92m²(713</span><span style="letter-spacing:-0.600px">세대</span><span style="position:relative;top:0.07em;letter-spacing:0.000px">)</span></div>
<svg style="position:absolute;left:665.725px;top:475.82px;" width="15" height="11" viewBox="0 0 15 11"><g fill="none" stroke="#8b3ff0" stroke-width="1.2" stroke-linecap="round" stroke-linejoin="round"><path d="M0.8 0.4 V10.4 H14"/><path d="M3.5 5.8 Q4.6 4 5.6 4 Q6.8 4.2 8.4 6.4 L11.1 3.8 L12.9 1.8"/><path d="M9.7 1.4 H13 V4.6"/></g></svg>
<div style="position:absolute;left:696.60px;top:472.02px;white-space:nowrap;font-size:12px;line-height:16px;color:#444;font-weight:normal;transform-origin:1.00px 50%;transform:scaleX(0.9071);--w:100;--s:0.9071;"><span style="letter-spacing:0.000px">194,151 ~ 214,588</span></div>
<div style="position:absolute;left:811.60px;top:472.02px;white-space:nowrap;font-size:12px;line-height:16px;color:#444;font-weight:normal;transform-origin:0.00px 50%;transform:scaleX(0.8980);--w:100;--s:0.8980;"><span style="letter-spacing:0.000px">200,000 ~ 240,000</span></div>
<div style="position:absolute;left:1024.10px;top:471.52px;white-space:nowrap;font-size:12px;line-height:16px;color:#4c4c4c;font-weight:normal;transform-origin:0.00px 50%;transform:scaleX(0.9391);--w:25;--s:0.9391;"><span style="position:relative;top:0.07em;letter-spacing:0.000px">91</span><span style="letter-spacing:-0.600px">건</span></div>
<svg style="position:absolute;left:1051.3px;top:476.62px;" width="10" height="10" viewBox="0 0 10 10"><circle cx="1.3" cy="1.3" r="1.25" fill="#8a3df2"/><circle cx="1.3" cy="4.9" r="1.25" fill="#8a3df2"/><circle cx="1.3" cy="8.5" r="1.25" fill="#8a3df2"/><circle cx="4.9" cy="1.3" r="1.25" fill="#8a3df2"/><circle cx="4.9" cy="4.9" r="1.25" fill="#8a3df2"/><circle cx="4.9" cy="8.5" r="1.25" fill="#8a3df2"/><circle cx="8.5" cy="1.3" r="1.25" fill="#8a3df2"/><circle cx="8.5" cy="4.9" r="1.25" fill="#8a3df2"/><circle cx="8.5" cy="8.5" r="1.25" fill="#8a3df2"/></svg>
<div style="position:absolute;left:1096.65px;top:472.52px;white-space:nowrap;font-size:12px;line-height:16px;color:#444;font-weight:normal;transform-origin:1.00px 50%;transform:scaleX(0.9316);--w:20;--s:0.9316;"><span style="letter-spacing:0.000px">129</span></div>
<div style="position:absolute;left:1149.70px;top:471.52px;white-space:nowrap;font-size:12px;line-height:16px;color:#444;font-weight:normal;transform-origin:1.00px 50%;transform:scaleX(0.9818);--w:25;--s:0.9818;"><span style="position:relative;top:0.07em;letter-spacing:0.000px">13</span><span style="letter-spacing:-0.600px">건</span></div>
<div style="position:absolute;left:1199.20px;top:472.52px;white-space:nowrap;font-size:12px;line-height:16px;color:#444;font-weight:normal;transform-origin:0.00px 50%;transform:scaleX(0.8923);--w:13;--s:0.8923;"><span style="letter-spacing:0.000px">26</span></div>
<div style="position:absolute;left:1238.60px;top:472.52px;white-space:nowrap;font-size:12px;line-height:16px;color:#444;font-weight:normal;transform-origin:0.00px 50%;transform:scaleX(0.8923);--w:13;--s:0.8923;"><span style="letter-spacing:0.000px">61</span></div>
<div style="position:absolute;left:1280.75px;top:472.52px;white-space:nowrap;font-size:12px;line-height:16px;color:#444;font-weight:normal;transform-origin:0.00px 50%;transform:scaleX(0.7857);--w:7;--s:0.7857;"><span style="letter-spacing:0.000px">4</span></div>
<div style="position:absolute;left:259.20px;top:505.75px;white-space:nowrap;font-size:12px;line-height:16px;color:#4c4c4c;font-weight:normal;transform-origin:1.00px 50%;transform:scaleX(0.8939);--w:34;--s:0.8939;"><span style="letter-spacing:-0.600px">개포동</span></div>
<svg style="position:absolute;left:294.5px;top:510.05px;" width="15" height="11" viewBox="0 0 15 11"><g fill="none" stroke="#8b3ff0" stroke-width="1.2" stroke-linecap="round" stroke-linejoin="round"><path d="M0.8 0.4 V10.4 H14"/><path d="M3.5 5.8 Q4.6 4 5.6 4 Q6.8 4.2 8.4 6.4 L11.1 3.8 L12.9 1.8"/><path d="M9.7 1.4 H13 V4.6"/></g></svg>
<div style="position:absolute;left:362.90px;top:505.75px;white-space:nowrap;font-size:12px;line-height:16px;color:#4c4c4c;font-weight:normal;transform-origin:1.00px 50%;transform:scaleX(0.8851);--w:103;--s:0.8851;"><span style="letter-spacing:-0.600px">개포래미안포레스트</span></div>
<svg style="position:absolute;left:458.19999999999993px;top:510.05px;" width="15" height="11" viewBox="0 0 15 11"><g fill="none" stroke="#8b3ff0" stroke-width="1.2" stroke-linecap="round" stroke-linejoin="round"><path d="M0.8 0.4 V10.4 H14"/><path d="M3.5 5.8 Q4.6 4 5.6 4 Q6.8 4.2 8.4 6.4 L11.1 3.8 L12.9 1.8"/><path d="M9.7 1.4 H13 V4.6"/></g></svg>
<div style="position:absolute;left:529.77px;top:506.25px;white-space:nowrap;font-size:12px;line-height:16px;color:#444;font-weight:normal;transform-origin:0.00px 50%;transform:scaleX(0.8817);--w:30;--s:0.8817;"><span style="letter-spacing:0.000px">2,296</span></div>
<div style="position:absolute;left:579.02px;top:505.05px;white-space:nowrap;font-size:12px;line-height:16px;color:#4c4c4c;font-weight:normal;transform-origin:1.00px 50%;transform:scaleX(0.8925);--w:88;--s:0.8925;"><span style="position:relative;top:0.07em;letter-spacing:0.000px">59.96m²(69</span><span style="letter-spacing:-0.600px">세대</span><span style="position:relative;top:0.07em;letter-spacing:0.000px">)</span></div>
<svg style="position:absolute;left:662.675px;top:510.05px;" width="15" height="11" viewBox="0 0 15 11"><g fill="none" stroke="#8b3ff0" stroke-width="1.2" stroke-linecap="round" stroke-linejoin="round"><path d="M0.8 0.4 V10.4 H14"/><path d="M3.5 5.8 Q4.6 4 5.6 4 Q6.8 4.2 8.4 6.4 L11.1 3.8 L12.9 1.8"/><path d="M9.7 1.4 H13 V4.6"/></g></svg>
<div style="position:absolute;left:696.60px;top:506.25px;white-space:nowrap;font-size:12px;line-height:16px;color:#444;font-weight:normal;transform-origin:1.00px 50%;transform:scaleX(0.9071);--w:100;--s:0.9071;"><span style="letter-spacing:0.000px">194,280 ~ 214,731</span></div>
<div style="position:absolute;left:811.60px;top:506.25px;white-space:nowrap;font-size:12px;line-height:16px;color:#444;font-weight:normal;transform-origin:0.00px 50%;transform:scaleX(0.8980);--w:100;--s:0.8980;"><span style="letter-spacing:0.000px">204,000 ~ 235,000</span></div>
<div style="position:absolute;left:1027.15px;top:505.75px;white-space:nowrap;font-size:12px;line-height:16px;color:#4c4c4c;font-weight:normal;transform-origin:0.00px 50%;transform:scaleX(0.9118);--w:18;--s:0.9118;"><span style="position:relative;top:0.07em;letter-spacing:0.000px">8</span><span style="letter-spacing:-0.600px">건</span></div>
<svg style="position:absolute;left:1048.25px;top:510.85px;" width="10" height="10" viewBox="0 0 10 10"><circle cx="1.3" cy="1.3" r="1.25" fill="#8a3df2"/><circle cx="1.3" cy="4.9" r="1.25" fill="#8a3df2"/><circle cx="1.3" cy="8.5" r="1.25" fill="#8a3df2"/><circle cx="4.9" cy="1.3" r="1.25" fill="#8a3df2"/><circle cx="4.9" cy="4.9" r="1.25" fill="#8a3df2"/><circle cx="4.9" cy="8.5" r="1.25" fill="#8a3df2"/><circle cx="8.5" cy="1.3" r="1.25" fill="#8a3df2"/><circle cx="8.5" cy="4.9" r="1.25" fill="#8a3df2"/><circle cx="8.5" cy="8.5" r="1.25" fill="#8a3df2"/></svg>
<div style="position:absolute;left:1096.65px;top:506.75px;white-space:nowrap;font-size:12px;line-height:16px;color:#444;font-weight:normal;transform-origin:1.00px 50%;transform:scaleX(0.9833);--w:19;--s:0.9833;"><span style="letter-spacing:0.000px">114</span></div>
<div style="position:absolute;left:1152.75px;top:505.75px;white-space:nowrap;font-size:12px;line-height:16px;color:#444;font-weight:normal;transform-origin:1.00px 50%;transform:scaleX(0.9688);--w:18;--s:0.9688;"><span style="position:relative;top:0.07em;letter-spacing:0.000px">5</span><span style="letter-spacing:-0.600px">건</span></div>
<div style="position:absolute;left:1202.25px;top:506.75px;white-space:nowrap;font-size:12px;line-height:16px;color:#444;font-weight:normal;transform-origin:0.00px 50%;transform:scaleX(0.9167);--w:7;--s:0.9167;"><span style="letter-spacing:0.000px">2</span></div>
<div style="position:absolute;left:1240.65px;top:506.75px;white-space:nowrap;font-size:12px;line-height:16px;color:#444;font-weight:normal;transform-origin:1.00px 50%;transform:scaleX(1.1000);--w:7;--s:1.1000;"><span style="letter-spacing:0.000px">5</span></div>
<div style="position:absolute;left:1279.75px;top:506.75px;white-space:nowrap;font-size:12px;line-height:16px;color:#444;font-weight:normal;transform-origin:1.00px 50%;transform:scaleX(1.1000);--w:7;--s:1.1000;"><span style="letter-spacing:0.000px">1</span></div>
<div style="position:absolute;left:259.20px;top:539.98px;white-space:nowrap;font-size:12px;line-height:16px;color:#4c4c4c;font-weight:normal;transform-origin:1.00px 50%;transform:scaleX(0.8939);--w:34;--s:0.8939;"><span style="letter-spacing:-0.600px">개포동</span></div>
<svg style="position:absolute;left:294.5px;top:544.28px;" width="15" height="11" viewBox="0 0 15 11"><g fill="none" stroke="#8b3ff0" stroke-width="1.2" stroke-linecap="round" stroke-linejoin="round"><path d="M0.8 0.4 V10.4 H14"/><path d="M3.5 5.8 Q4.6 4 5.6 4 Q6.8 4.2 8.4 6.4 L11.1 3.8 L12.9 1.8"/><path d="M9.7 1.4 H13 V4.6"/></g></svg>
<div style="position:absolute;left:362.90px;top:539.98px;white-space:nowrap;font-size:12px;line-height:16px;color:#4c4c4c;font-weight:normal;transform-origin:1.00px 50%;transform:scaleX(0.8851);--w:103;--s:0.8851;"><span style="letter-spacing:-0.600px">개포래미안포레스트</span></div>
<svg style="position:absolute;left:458.19999999999993px;top:544.28px;" width="15" height="11" viewBox="0 0 15 11"><g fill="none" stroke="#8b3ff0" stroke-width="1.2" stroke-linecap="round" stroke-linejoin="round"><path d="M0.8 0.4 V10.4 H14"/><path d="M3.5 5.8 Q4.6 4 5.6 4 Q6.8 4.2 8.4 6.4 L11.1 3.8 L12.9 1.8"/><path d="M9.7 1.4 H13 V4.6"/></g></svg>
<div style="position:absolute;left:529.77px;top:540.48px;white-space:nowrap;font-size:12px;line-height:16px;color:#444;font-weight:normal;transform-origin:0.00px 50%;transform:scaleX(0.8817);--w:30;--s:0.8817;"><span style="letter-spacing:0.000px">2,296</span></div>
<div style="position:absolute;left:576.98px;top:539.28px;white-space:nowrap;font-size:12px;line-height:16px;color:#4c4c4c;font-weight:normal;transform-origin:0.00px 50%;transform:scaleX(0.8910);--w:95;--s:0.8910;"><span style="position:relative;top:0.07em;letter-spacing:0.000px">74.66m²(226</span><span style="letter-spacing:-0.600px">세대</span><span style="position:relative;top:0.07em;letter-spacing:0.000px">)</span></div>
<svg style="position:absolute;left:665.725px;top:544.28px;" width="15" height="11" viewBox="0 0 15 11"><g fill="none" stroke="#8b3ff0" stroke-width="1.2" stroke-linecap="round" stroke-linejoin="round"><path d="M0.8 0.4 V10.4 H14"/><path d="M3.5 5.8 Q4.6 4 5.6 4 Q6.8 4.2 8.4 6.4 L11.1 3.8 L12.9 1.8"/><path d="M9.7 1.4 H13 V4.6"/></g></svg>
<div style="position:absolute;left:740.80px;top:539.98px;white-space:nowrap;font-size:12px;line-height:16px;color:#444;font-weight:normal;transform-origin:0.00px 50%;transform:scaleX(0.8500);--w:4;--s:0.8500;"><span style="letter-spacing:0.000px">-</span></div>
<div style="position:absolute;left:811.60px;top:540.48px;white-space:nowrap;font-size:12px;line-height:16px;color:#444;font-weight:normal;transform-origin:0.00px 50%;transform:scaleX(0.8980);--w:100;--s:0.8980;"><span style="letter-spacing:0.000px">260,000 ~ 275,000</span></div>
<div style="position:absolute;left:1024.10px;top:539.98px;white-space:nowrap;font-size:12px;line-height:16px;color:#4c4c4c;font-weight:normal;transform-origin:0.00px 50%;transform:scaleX(0.9391);--w:25;--s:0.9391;"><span style="position:relative;top:0.07em;letter-spacing:0.000px">21</span><span style="letter-spacing:-0.600px">건</span></div>
<svg style="position:absolute;left:1051.3px;top:545.08px;" width="10" height="10" viewBox="0 0 10 10"><circle cx="1.3" cy="1.3" r="1.25" fill="#8a3df2"/><circle cx="1.3" cy="4.9" r="1.25" fill="#8a3df2"/><circle cx="1.3" cy="8.5" r="1.25" fill="#8a3df2"/><circle cx="4.9" cy="1.3" r="1.25" fill="#8a3df2"/><circle cx="4.9" cy="4.9" r="1.25" fill="#8a3df2"/><circle cx="4.9" cy="8.5" r="1.25" fill="#8a3df2"/><circle cx="8.5" cy="1.3" r="1.25" fill="#8a3df2"/><circle cx="8.5" cy="4.9" r="1.25" fill="#8a3df2"/><circle cx="8.5" cy="8.5" r="1.25" fill="#8a3df2"/></svg>
<div style="position:absolute;left:1096.65px;top:540.98px;white-space:nowrap;font-size:12px;line-height:16px;color:#444;font-weight:normal;transform-origin:1.00px 50%;transform:scaleX(0.9316);--w:20;--s:0.9316;"><span style="letter-spacing:0.000px">126</span></div>
<div style="position:absolute;left:1152.75px;top:539.98px;white-space:nowrap;font-size:12px;line-height:16px;color:#444;font-weight:normal;transform-origin:1.00px 50%;transform:scaleX(0.9688);--w:18;--s:0.9688;"><span style="position:relative;top:0.07em;letter-spacing:0.000px">3</span><span style="letter-spacing:-0.600px">건</span></div>
<div style="position:absolute;left:1202.25px;top:540.98px;white-space:nowrap;font-size:12px;line-height:16px;color:#444;font-weight:normal;transform-origin:0.00px 50%;transform:scaleX(0.9167);--w:7;--s:0.9167;"><span style="letter-spacing:0.000px">7</span></div>
<div style="position:absolute;left:1237.60px;top:540.98px;white-space:nowrap;font-size:12px;line-height:16px;color:#444;font-weight:normal;transform-origin:1.00px 50%;transform:scaleX(1.0545);--w:12;--s:1.0545;"><span style="letter-spacing:0.000px">11</span></div>
<div style="position:absolute;left:1279.75px;top:540.98px;white-space:nowrap;font-size:12px;line-height:16px;color:#444;font-weight:normal;transform-origin:1.00px 50%;transform:scaleX(1.1000);--w:7;--s:1.1000;"><span style="letter-spacing:0.000px">3</span></div>
<div style="position:absolute;left:259.20px;top:574.21px;white-space:nowrap;font-size:12px;line-height:16px;color:#4c4c4c;font-weight:normal;transform-origin:1.00px 50%;transform:scaleX(0.8939);--w:34;--s:0.8939;"><span style="letter-spacing:-0.600px">개포동</span></div>
<svg style="position:absolute;left:294.5px;top:578.51px;" width="15" height="11" viewBox="0 0 15 11"><g fill="none" stroke="#8b3ff0" stroke-width="1.2" stroke-linecap="round" stroke-linejoin="round"><path d="M0.8 0.4 V10.4 H14"/><path d="M3.5 5.8 Q4.6 4 5.6 4 Q6.8 4.2 8.4 6.4 L11.1 3.8 L12.9 1.8"/><path d="M9.7 1.4 H13 V4.6"/></g></svg>
<div style="position:absolute;left:362.90px;top:574.21px;white-space:nowrap;font-size:12px;line-height:16px;color:#4c4c4c;font-weight:normal;transform-origin:1.00px 50%;transform:scaleX(0.8851);--w:103;--s:0.8851;"><span style="letter-spacing:-0.600px">개포래미안포레스트</span></div>
<svg style="position:absolute;left:458.19999999999993px;top:578.51px;" width="15" height="11" viewBox="0 0 15 11"><g fill="none" stroke="#8b3ff0" stroke-width="1.2" stroke-linecap="round" stroke-linejoin="round"><path d="M0.8 0.4 V10.4 H14"/><path d="M3.5 5.8 Q4.6 4 5.6 4 Q6.8 4.2 8.4 6.4 L11.1 3.8 L12.9 1.8"/><path d="M9.7 1.4 H13 V4.6"/></g></svg>
<div style="position:absolute;left:529.77px;top:574.71px;white-space:nowrap;font-size:12px;line-height:16px;color:#444;font-weight:normal;transform-origin:0.00px 50%;transform:scaleX(0.8817);--w:30;--s:0.8817;"><span style="letter-spacing:0.000px">2,296</span></div>
<div style="position:absolute;left:576.98px;top:573.51px;white-space:nowrap;font-size:12px;line-height:16px;color:#4c4c4c;font-weight:normal;transform-origin:0.00px 50%;transform:scaleX(0.8910);--w:95;--s:0.8910;"><span style="position:relative;top:0.07em;letter-spacing:0.000px">84.86m²(348</span><span style="letter-spacing:-0.600px">세대</span><span style="position:relative;top:0.07em;letter-spacing:0.000px">)</span></div>
<svg style="position:absolute;left:665.725px;top:578.51px;" width="15" height="11" viewBox="0 0 15 11"><g fill="none" stroke="#8b3ff0" stroke-width="1.2" stroke-linecap="round" stroke-linejoin="round"><path d="M0.8 0.4 V10.4 H14"/><path d="M3.5 5.8 Q4.6 4 5.6 4 Q6.8 4.2 8.4 6.4 L11.1 3.8 L12.9 1.8"/><path d="M9.7 1.4 H13 V4.6"/></g></svg>
<div style="position:absolute;left:697.60px;top:574.71px;white-space:nowrap;font-size:12px;line-height:16px;color:#444;font-weight:normal;transform-origin:0.00px 50%;transform:scaleX(0.8980);--w:100;--s:0.8980;"><span style="letter-spacing:0.000px">283,896 ~ 313,780</span></div>
<div style="position:absolute;left:811.60px;top:574.71px;white-space:nowrap;font-size:12px;line-height:16px;color:#444;font-weight:normal;transform-origin:0.00px 50%;transform:scaleX(0.8980);--w:100;--s:0.8980;"><span style="letter-spacing:0.000px">273,000 ~ 320,000</span></div>
<div style="position:absolute;left:1023.10px;top:574.21px;white-space:nowrap;font-size:12px;line-height:16px;color:#4c4c4c;font-weight:normal;transform-origin:1.00px 50%;transform:scaleX(0.9818);--w:25;--s:0.9818;"><span style="position:relative;top:0.07em;letter-spacing:0.000px">38</span><span style="letter-spacing:-0.600px">건</span></div>
<svg style="position:absolute;left:1051.3px;top:579.3100000000001px;" width="10" height="10" viewBox="0 0 10 10"><circle cx="1.3" cy="1.3" r="1.25" fill="#8a3df2"/><circle cx="1.3" cy="4.9" r="1.25" fill="#8a3df2"/><circle cx="1.3" cy="8.5" r="1.25" fill="#8a3df2"/><circle cx="4.9" cy="1.3" r="1.25" fill="#8a3df2"/><circle cx="4.9" cy="4.9" r="1.25" fill="#8a3df2"/><circle cx="4.9" cy="8.5" r="1.25" fill="#8a3df2"/><circle cx="8.5" cy="1.3" r="1.25" fill="#8a3df2"/><circle cx="8.5" cy="4.9" r="1.25" fill="#8a3df2"/><circle cx="8.5" cy="8.5" r="1.25" fill="#8a3df2"/></svg>
<div style="position:absolute;left:1096.65px;top:575.21px;white-space:nowrap;font-size:12px;line-height:16px;color:#444;font-weight:normal;transform-origin:1.00px 50%;transform:scaleX(0.9316);--w:20;--s:0.9316;"><span style="letter-spacing:0.000px">121</span></div>
<div style="position:absolute;left:1152.75px;top:574.21px;white-space:nowrap;font-size:12px;line-height:16px;color:#444;font-weight:normal;transform-origin:1.00px 50%;transform:scaleX(0.9688);--w:18;--s:0.9688;"><span style="position:relative;top:0.07em;letter-spacing:0.000px">3</span><span style="letter-spacing:-0.600px">건</span></div>
<div style="position:absolute;left:1198.20px;top:575.21px;white-space:nowrap;font-size:12px;line-height:16px;color:#444;font-weight:normal;transform-origin:1.00px 50%;transform:scaleX(0.9667);--w:13;--s:0.9667;"><span style="letter-spacing:0.000px">12</span></div>
<div style="position:absolute;left:1241.65px;top:575.21px;white-space:nowrap;font-size:12px;line-height:16px;color:#444;font-weight:normal;transform-origin:0.00px 50%;transform:scaleX(0.9167);--w:7;--s:0.9167;"><span style="letter-spacing:0.000px">7</span></div>
<div style="position:absolute;left:1276.70px;top:575.21px;white-space:nowrap;font-size:12px;line-height:16px;color:#444;font-weight:normal;transform-origin:1.00px 50%;transform:scaleX(0.9667);--w:13;--s:0.9667;"><span style="letter-spacing:0.000px">19</span></div>
<svg style="position:absolute;left:0;top:0" width="1355" height="658"><line x1="917.5" y1="351.2" x2="1005" y2="351.2" stroke="#c9cfe9" stroke-width="1"/><polyline points="917.9,350.8 927.6,350.8 937.9,350.8 944.1,344.6 952.4,341.5 960.6,340.1 969.9,344.6 978.2,342.9 986.5,337.4 994.7,335.3 1004.7,338.4" fill="none" stroke="#6fd0c1" stroke-width="1.1"/><circle cx="917.9" cy="350.8" r="0.9" fill="#6fd0c1"/><circle cx="927.6" cy="350.8" r="0.9" fill="#6fd0c1"/><circle cx="937.9" cy="350.8" r="0.9" fill="#6fd0c1"/><circle cx="944.1" cy="344.6" r="0.9" fill="#6fd0c1"/><circle cx="952.4" cy="341.5" r="0.9" fill="#6fd0c1"/><circle cx="960.6" cy="340.1" r="0.9" fill="#6fd0c1"/><circle cx="969.9" cy="344.6" r="0.9" fill="#6fd0c1"/><circle cx="978.2" cy="342.9" r="0.9" fill="#6fd0c1"/><circle cx="986.5" cy="337.4" r="0.9" fill="#6fd0c1"/><circle cx="994.7" cy="335.3" r="0.9" fill="#6fd0c1"/><circle cx="1004.7" cy="338.4" r="0.9" fill="#6fd0c1"/><line x1="917.5" y1="385.5" x2="1005" y2="385.5" stroke="#c9cfe9" stroke-width="1"/><polyline points="917.9,374.2 923.4,379.7 928.6,374.6 938.9,374.6 944.1,369.8 949.3,374.6 968.9,374.6 974.1,384.9 979.2,379.7 998.9,379.7 1004.7,374.2" fill="none" stroke="#6fd0c1" stroke-width="1.1"/><circle cx="917.9" cy="374.2" r="0.9" fill="#6fd0c1"/><circle cx="923.4" cy="379.7" r="0.9" fill="#6fd0c1"/><circle cx="928.6" cy="374.6" r="0.9" fill="#6fd0c1"/><circle cx="938.9" cy="374.6" r="0.9" fill="#6fd0c1"/><circle cx="944.1" cy="369.8" r="0.9" fill="#6fd0c1"/><circle cx="949.3" cy="374.6" r="0.9" fill="#6fd0c1"/><circle cx="968.9" cy="374.6" r="0.9" fill="#6fd0c1"/><circle cx="974.1" cy="384.9" r="0.9" fill="#6fd0c1"/><circle cx="979.2" cy="379.7" r="0.9" fill="#6fd0c1"/><circle cx="998.9" cy="379.7" r="0.9" fill="#6fd0c1"/><circle cx="1004.7" cy="374.2" r="0.9" fill="#6fd0c1"/><line x1="917.5" y1="419.4" x2="1005" y2="419.4" stroke="#c9cfe9" stroke-width="1"/><polyline points="917.9,411.8 923.4,416.3 933.8,416.3 938.9,417.4 944.1,413.8 949.3,413.8 953.4,408.7 958.6,404.1 964.8,404.1 968.9,408.7 974.1,414.3 979.2,407.6 984.4,407.6 989.6,410.7 993.7,418.6 998.9,416.3 1004.7,413.8" fill="none" stroke="#6fd0c1" stroke-width="1.1"/><circle cx="917.9" cy="411.8" r="0.9" fill="#6fd0c1"/><circle cx="923.4" cy="416.3" r="0.9" fill="#6fd0c1"/><circle cx="933.8" cy="416.3" r="0.9" fill="#6fd0c1"/><circle cx="938.9" cy="417.4" r="0.9" fill="#6fd0c1"/><circle cx="944.1" cy="413.8" r="0.9" fill="#6fd0c1"/><circle cx="949.3" cy="413.8" r="0.9" fill="#6fd0c1"/><circle cx="953.4" cy="408.7" r="0.9" fill="#6fd0c1"/><circle cx="958.6" cy="404.1" r="0.9" fill="#6fd0c1"/><circle cx="964.8" cy="404.1" r="0.9" fill="#6fd0c1"/><circle cx="968.9" cy="408.7" r="0.9" fill="#6fd0c1"/><circle cx="974.1" cy="414.3" r="0.9" fill="#6fd0c1"/><circle cx="979.2" cy="407.6" r="0.9" fill="#6fd0c1"/><circle cx="984.4" cy="407.6" r="0.9" fill="#6fd0c1"/><circle cx="989.6" cy="410.7" r="0.9" fill="#6fd0c1"/><circle cx="993.7" cy="418.6" r="0.9" fill="#6fd0c1"/><circle cx="998.9" cy="416.3" r="0.9" fill="#6fd0c1"/><circle cx="1004.7" cy="413.8" r="0.9" fill="#6fd0c1"/><line x1="917.5" y1="453.5" x2="1005" y2="453.5" stroke="#c9cfe9" stroke-width="1"/><polyline points="917.9,452.5 923.4,453.1 933.8,451.1 944.1,450.0 949.3,449.4 954.4,447.5 959.6,446.5 964.8,446.5 969.9,448.0 978.2,445.9 984.4,442.8 988.5,442.2 993.7,438.2 998.9,438.2 1004.7,440.1" fill="none" stroke="#6fd0c1" stroke-width="1.1"/><circle cx="917.9" cy="452.5" r="0.9" fill="#6fd0c1"/><circle cx="923.4" cy="453.1" r="0.9" fill="#6fd0c1"/><circle cx="933.8" cy="451.1" r="0.9" fill="#6fd0c1"/><circle cx="944.1" cy="450.0" r="0.9" fill="#6fd0c1"/><circle cx="949.3" cy="449.4" r="0.9" fill="#6fd0c1"/><circle cx="954.4" cy="447.5" r="0.9" fill="#6fd0c1"/><circle cx="959.6" cy="446.5" r="0.9" fill="#6fd0c1"/><circle cx="964.8" cy="446.5" r="0.9" fill="#6fd0c1"/><circle cx="969.9" cy="448.0" r="0.9" fill="#6fd0c1"/><circle cx="978.2" cy="445.9" r="0.9" fill="#6fd0c1"/><circle cx="984.4" cy="442.8" r="0.9" fill="#6fd0c1"/><circle cx="988.5" cy="442.2" r="0.9" fill="#6fd0c1"/><circle cx="993.7" cy="438.2" r="0.9" fill="#6fd0c1"/><circle cx="998.9" cy="438.2" r="0.9" fill="#6fd0c1"/><circle cx="1004.7" cy="440.1" r="0.9" fill="#6fd0c1"/><line x1="917.5" y1="487.8" x2="1005" y2="487.8" stroke="#c9cfe9" stroke-width="1"/><polyline points="917.9,482.7 923.4,483.7 928.6,484.7 933.8,486.8 938.9,485.8 944.1,486.8 949.3,485.4 953.4,484.3 958.6,481.6 963.7,479.6 968.9,478.9 974.1,473.4 979.2,474.8 984.4,474.8 989.6,476.9 993.7,475.4 998.9,474.4 1004.7,472.3" fill="none" stroke="#6fd0c1" stroke-width="1.1"/><circle cx="917.9" cy="482.7" r="0.9" fill="#6fd0c1"/><circle cx="923.4" cy="483.7" r="0.9" fill="#6fd0c1"/><circle cx="928.6" cy="484.7" r="0.9" fill="#6fd0c1"/><circle cx="933.8" cy="486.8" r="0.9" fill="#6fd0c1"/><circle cx="938.9" cy="485.8" r="0.9" fill="#6fd0c1"/><circle cx="944.1" cy="486.8" r="0.9" fill="#6fd0c1"/><circle cx="949.3" cy="485.4" r="0.9" fill="#6fd0c1"/><circle cx="953.4" cy="484.3" r="0.9" fill="#6fd0c1"/><circle cx="958.6" cy="481.6" r="0.9" fill="#6fd0c1"/><circle cx="963.7" cy="479.6" r="0.9" fill="#6fd0c1"/><circle cx="968.9" cy="478.9" r="0.9" fill="#6fd0c1"/><circle cx="974.1" cy="473.4" r="0.9" fill="#6fd0c1"/><circle cx="979.2" cy="474.8" r="0.9" fill="#6fd0c1"/><circle cx="984.4" cy="474.8" r="0.9" fill="#6fd0c1"/><circle cx="989.6" cy="476.9" r="0.9" fill="#6fd0c1"/><circle cx="993.7" cy="475.4" r="0.9" fill="#6fd0c1"/><circle cx="998.9" cy="474.4" r="0.9" fill="#6fd0c1"/><circle cx="1004.7" cy="472.3" r="0.9" fill="#6fd0c1"/><line x1="917.5" y1="522.4" x2="1005" y2="522.4" stroke="#c9cfe9" stroke-width="1"/><polyline points="917.9,518.2 923.4,517.8 928.6,514.7 933.8,516.2 938.9,518.8 944.1,521.3 949.3,516.4 954.4,516.2 958.6,512.6 963.7,518.2 968.9,514.7 974.1,516.2 979.2,509.5 984.4,511.2 988.5,506.4 993.7,511.2 998.9,508.5 1004.7,511.2" fill="none" stroke="#6fd0c1" stroke-width="1.1"/><circle cx="917.9" cy="518.2" r="0.9" fill="#6fd0c1"/><circle cx="923.4" cy="517.8" r="0.9" fill="#6fd0c1"/><circle cx="928.6" cy="514.7" r="0.9" fill="#6fd0c1"/><circle cx="933.8" cy="516.2" r="0.9" fill="#6fd0c1"/><circle cx="938.9" cy="518.8" r="0.9" fill="#6fd0c1"/><circle cx="944.1" cy="521.3" r="0.9" fill="#6fd0c1"/><circle cx="949.3" cy="516.4" r="0.9" fill="#6fd0c1"/><circle cx="954.4" cy="516.2" r="0.9" fill="#6fd0c1"/><circle cx="958.6" cy="512.6" r="0.9" fill="#6fd0c1"/><circle cx="963.7" cy="518.2" r="0.9" fill="#6fd0c1"/><circle cx="968.9" cy="514.7" r="0.9" fill="#6fd0c1"/><circle cx="974.1" cy="516.2" r="0.9" fill="#6fd0c1"/><circle cx="979.2" cy="509.5" r="0.9" fill="#6fd0c1"/><circle cx="984.4" cy="511.2" r="0.9" fill="#6fd0c1"/><circle cx="988.5" cy="506.4" r="0.9" fill="#6fd0c1"/><circle cx="993.7" cy="511.2" r="0.9" fill="#6fd0c1"/><circle cx="998.9" cy="508.5" r="0.9" fill="#6fd0c1"/><circle cx="1004.7" cy="511.2" r="0.9" fill="#6fd0c1"/><line x1="917.5" y1="556.5" x2="1005" y2="556.5" stroke="#c9cfe9" stroke-width="1"/><polyline points="917.9,555.0 923.4,555.0 928.6,554.0 933.8,552.9 938.9,554.0 944.1,554.0 949.3,555.0 953.4,552.5 958.6,547.8 963.7,548.8 968.9,551.3 974.1,552.3 979.2,548.8 984.4,545.3 988.5,543.6 993.7,546.1 998.9,546.1 1004.7,540.5" fill="none" stroke="#6fd0c1" stroke-width="1.1"/><circle cx="917.9" cy="555.0" r="0.9" fill="#6fd0c1"/><circle cx="923.4" cy="555.0" r="0.9" fill="#6fd0c1"/><circle cx="928.6" cy="554.0" r="0.9" fill="#6fd0c1"/><circle cx="933.8" cy="552.9" r="0.9" fill="#6fd0c1"/><circle cx="938.9" cy="554.0" r="0.9" fill="#6fd0c1"/><circle cx="944.1" cy="554.0" r="0.9" fill="#6fd0c1"/><circle cx="949.3" cy="555.0" r="0.9" fill="#6fd0c1"/><circle cx="953.4" cy="552.5" r="0.9" fill="#6fd0c1"/><circle cx="958.6" cy="547.8" r="0.9" fill="#6fd0c1"/><circle cx="963.7" cy="548.8" r="0.9" fill="#6fd0c1"/><circle cx="968.9" cy="551.3" r="0.9" fill="#6fd0c1"/><circle cx="974.1" cy="552.3" r="0.9" fill="#6fd0c1"/><circle cx="979.2" cy="548.8" r="0.9" fill="#6fd0c1"/><circle cx="984.4" cy="545.3" r="0.9" fill="#6fd0c1"/><circle cx="988.5" cy="543.6" r="0.9" fill="#6fd0c1"/><circle cx="993.7" cy="546.1" r="0.9" fill="#6fd0c1"/><circle cx="998.9" cy="546.1" r="0.9" fill="#6fd0c1"/><circle cx="1004.7" cy="540.5" r="0.9" fill="#6fd0c1"/><line x1="917.5" y1="590.6" x2="1005" y2="590.6" stroke="#c9cfe9" stroke-width="1"/><polyline points="917.9,582.5 923.4,585.4 928.6,586.6 933.8,588.7 938.9,588.1 944.1,587.1 949.3,586.0 953.4,581.5 958.6,578.8 963.7,576.7 968.9,579.8 974.1,578.8 979.2,575.1 984.4,576.1 988.5,580.9 993.7,582.9 998.9,580.2 1004.7,578.8" fill="none" stroke="#6fd0c1" stroke-width="1.1"/><circle cx="917.9" cy="582.5" r="0.9" fill="#6fd0c1"/><circle cx="923.4" cy="585.4" r="0.9" fill="#6fd0c1"/><circle cx="928.6" cy="586.6" r="0.9" fill="#6fd0c1"/><circle cx="933.8" cy="588.7" r="0.9" fill="#6fd0c1"/><circle cx="938.9" cy="588.1" r="0.9" fill="#6fd0c1"/><circle cx="944.1" cy="587.1" r="0.9" fill="#6fd0c1"/><circle cx="949.3" cy="586.0" r="0.9" fill="#6fd0c1"/><circle cx="953.4" cy="581.5" r="0.9" fill="#6fd0c1"/><circle cx="958.6" cy="578.8" r="0.9" fill="#6fd0c1"/><circle cx="963.7" cy="576.7" r="0.9" fill="#6fd0c1"/><circle cx="968.9" cy="579.8" r="0.9" fill="#6fd0c1"/><circle cx="974.1" cy="578.8" r="0.9" fill="#6fd0c1"/><circle cx="979.2" cy="575.1" r="0.9" fill="#6fd0c1"/><circle cx="984.4" cy="576.1" r="0.9" fill="#6fd0c1"/><circle cx="988.5" cy="580.9" r="0.9" fill="#6fd0c1"/><circle cx="993.7" cy="582.9" r="0.9" fill="#6fd0c1"/><circle cx="998.9" cy="580.2" r="0.9" fill="#6fd0c1"/><circle cx="1004.7" cy="578.8" r="0.9" fill="#6fd0c1"/></svg>
<div style="position:absolute;left:35.5px;top:326px;width:1260px;height:264px;overflow:hidden"><svg style="position:absolute;left:-35.5px;top:-326px" width="1355" height="658"><defs>
<g id="ico">
<path d="M51.32 345.28 A7.2 7.2 0 1 1 58.45 349.65" fill="none" stroke="#ee4a7f" stroke-width="1.4"/>
<path d="M58.4 339.1 V345.3 M55.3 342.2 H61.5" stroke="#ee4a7f" stroke-width="1.4"/>
<path d="M56.3 344.2 L53.6 348.6" stroke="#ee4a7f" stroke-width="2"/>
<path d="M50.2 348.3 L56.7 348.5 L53.4 352.2 Z" fill="#ee4a7f"/>
<path d="M100.4 349.9 C97.5 346.6 95.6 344.3 95.6 341.6 A4.8 4.8 0 0 1 105.2 341.6 C105.2 344.3 103.3 346.6 100.4 349.9 Z" fill="#8a2df5"/>
<circle cx="100.4" cy="341.5" r="2.1" fill="#fff"/>
<path d="M137.1 343.8 V341.2 L142.15 336.4 L147.2 341.2 V343.8" fill="none" stroke="#8a2df5" stroke-width="1.4" stroke-linejoin="round"/>
<circle cx="140.9" cy="342.5" r="0.75" fill="#8a2df5"/><circle cx="143.4" cy="342.5" r="0.75" fill="#8a2df5"/>
<path d="M135.6 350 V346.2 M135.6 347.8 A1.7 1.7 0 0 1 139 347.8 V350 M140.6 347.9 H143.9 A1.7 1.7 0 1 0 143.2 349.3 M144.8 346.2 V348.4 A1.4 1.4 0 0 0 147.6 348.4 V346.6 M147.6 348.4 A1.4 1.4 0 0 0 150.4 348.4 V346.2" fill="none" stroke="#8a2df5" stroke-width="1.25"/>
<path d="M176.9 338.4 H181.2 L185.3 344.6 V338.4 H189.4 V349.9 H185.2 L181.1 343.7 V349.9 H176.9 Z" fill="#1ac82a"/>
<rect x="219.6" y="337.2" width="11" height="14" rx="2.5" fill="#f7f7f7" stroke="#666" stroke-width="1.2"/>
<path d="M221.8 339.5 H223.8" stroke="#555" stroke-width="0.9"/>
<path d="M222.2 345.2 L228.2 340.4 L234.7 345.2 L233.3 345.6 V350.9 H223.4 V345.6 Z" fill="#f3a03a" stroke="#3a3a3a" stroke-width="0.8" stroke-linejoin="round"/>
<circle cx="226.6" cy="345.5" r="0.7" fill="#4a3010"/><circle cx="229.5" cy="345.5" r="0.7" fill="#4a3010"/><circle cx="229.5" cy="348.2" r="0.65" fill="#4a3010"/>
</g></defs><use href="#ico" transform="translate(0,0.00)"/><use href="#ico" transform="translate(0,34.23)"/><use href="#ico" transform="translate(0,68.46)"/><use href="#ico" transform="translate(0,102.69)"/><use href="#ico" transform="translate(0,136.92)"/><use href="#ico" transform="translate(0,171.15)"/><use href="#ico" transform="translate(0,205.38)"/><use href="#ico" transform="translate(0,239.61)"/></svg></div>
<div style="position:absolute;left:1294.7px;top:256px;width:9.3px;height:70px;background:#eff2fc;border-top:1px solid #e0e5f7;border-left:1px solid #dde3f5;border-bottom:1px solid #dde3f5"></div>
<div style="position:absolute;left:1294.7px;top:326px;width:9px;height:264px;background:#eef0f8"></div>
<div style="position:absolute;left:1294.7px;top:326px;width:9px;height:93px;background:#b9c1de"></div>
<div style="position:absolute;left:35.5px;top:590px;width:1259.2px;height:13px;background:#eceff8"></div>
<div style="position:absolute;left:35.5px;top:590px;width:1047px;height:13px;background:#b9c1de"></div>
<div style="position:absolute;left:1294.7px;top:590px;width:9px;height:13px;background:#fff"></div>
<div style="position:absolute;left:35.5px;top:603px;width:1268.5px;height:49px;background:#eff2fc;border-bottom:2px solid #d5dbee;border-top:1px solid #e2e6f3"></div>
<svg style="position:absolute;left:51px;top:622px;" width="8" height="9" viewBox="0 0 8 9"><path d="M1 0.5 V8.5" stroke="#ccd2e6" stroke-width="1.2"/><path d="M7.5 0.5 L2.5 4.5 L7.5 8.5 Z" fill="#ccd2e6"/></svg>
<svg style="position:absolute;left:77px;top:623px;" width="6" height="8" viewBox="0 0 6 8"><path d="M5.5 0.5 L0.5 4 L5.5 7.5 Z" fill="#ccd2e6"/></svg>
<div style="position:absolute;left:102.00px;top:618.00px;white-space:nowrap;font-size:12px;line-height:16px;color:#666;font-weight:normal;transform-origin:1.00px 50%;transform:scaleX(0.9375);--w:34;--s:0.9375;"><span style="letter-spacing:-0.600px">페이지</span></div>
<div style="position:absolute;left:140px;top:614.7px;width:35.6px;height:24.7px;background:#fff;border:1px solid #dfe4f3;border-radius:2px"></div>
<div style="position:absolute;left:147.50px;top:620.00px;white-space:nowrap;font-size:12px;line-height:16px;color:#555;font-weight:normal;transform-origin:1.00px 50%;transform:scaleX(1.1400);--w:7;--s:1.1400;"><span style="letter-spacing:0.000px">1</span></div>
<div style="position:absolute;left:183.40px;top:619.00px;white-space:nowrap;font-size:12px;line-height:16px;color:#666;font-weight:normal;transform-origin:0.00px 50%;transform:scaleX(0.8950);--w:20;--s:0.8950;"><span style="letter-spacing:0.000px">of 1</span></div>
<svg style="position:absolute;left:222px;top:623px;" width="6" height="8" viewBox="0 0 6 8"><path d="M0.5 0.5 L5.5 4 L0.5 7.5 Z" fill="#ccd2e6"/></svg>
<svg style="position:absolute;left:245px;top:622px;" width="8" height="9" viewBox="0 0 8 9"><path d="M7 0.5 V8.5" stroke="#ccd2e6" stroke-width="1.2"/><path d="M0.5 0.5 L5.5 4.5 L0.5 8.5 Z" fill="#ccd2e6"/></svg>
<div style="position:absolute;left:1177.40px;top:618.70px;white-space:nowrap;font-size:12px;line-height:16px;color:#555e7a;font-weight:normal;-webkit-text-stroke:0.3px currentColor;transform-origin:0.00px 50%;transform:scaleX(0.8820);--w:122;--s:0.8820;"><span style="letter-spacing:-0.600px">레코드위치</span><span style="position:relative;top:0.07em;letter-spacing:0.000px"> 1 - 20 </span><span style="letter-spacing:-0.600px">중</span><span style="position:relative;top:0.07em;letter-spacing:0.000px"> 20</span></div>
<div style="position:absolute;left:686.5px;top:106.5px;width:170px;height:307.3px;background:#fff;border:5px solid #ff0000"></div>
<div style="position:absolute;left:704.60px;top:127.80px;white-space:nowrap;font-size:17px;line-height:21px;color:#222;font-weight:bold;transform-origin:2.00px 50%;transform:scaleX(1.0207);--w:32;--s:1.0207;"><span style="letter-spacing:-0.850px">면적</span></div>
<div style="position:absolute;left:745.5px;top:127.5px;width:43px;height:22.5px;background:#f0f2f7;border-radius:12px"></div>
<div style="position:absolute;left:755.00px;top:129.90px;white-space:nowrap;font-size:12px;line-height:16px;color:#444;font-weight:normal;transform-origin:1.00px 50%;transform:scaleX(1.0650);--w:23;--s:1.0650;"><span style="letter-spacing:-0.600px">평형</span></div>
<div style="position:absolute;left:791px;top:127.3px;width:55.5px;height:22.7px;background:#6f2fc9;border-radius:12px"></div>
<div style="position:absolute;left:796.00px;top:128.90px;white-space:nowrap;font-size:12px;line-height:16px;color:#fff;font-weight:bold;transform-origin:1.00px 50%;transform:scaleX(0.9682);--w:45;--s:0.9682;"><span style="letter-spacing:-0.600px">전용</span><span style="position:relative;top:0.07em;letter-spacing:0.000px">(m²)</span></div>
<div style="position:absolute;left:691.5px;top:164px;width:160px;height:1px;background:#cfd5e3"></div>
<div style="position:absolute;left:704.4px;top:182.2px;width:17.2px;height:17.2px;background:#7b3fe4;border-radius:3px"></div>
<svg style="position:absolute;left:704.4px;top:182.2px;" width="17.2" height="17.2" viewBox="0 0 17.2 17.2"><path d="M4.2 8.8 L7.4 11.8 L13 5.8" fill="none" stroke="#fff" stroke-width="1.9" stroke-linecap="round" stroke-linejoin="round"/></svg>
<div style="position:absolute;left:725.00px;top:182.50px;white-space:nowrap;font-size:13px;line-height:17px;color:#444;font-weight:normal;transform-origin:1.00px 50%;transform:scaleX(1.0318);--w:25;--s:1.0318;"><span style="letter-spacing:-0.650px">전체</span></div>
<div style="position:absolute;left:704.4px;top:208.39999999999998px;width:17.2px;height:17.2px;border:1.5px solid #c8cdea;border-radius:3px;background:#fff"></div>
<div style="position:absolute;left:726.00px;top:208.70px;white-space:nowrap;font-size:13px;line-height:17px;color:#444;font-weight:normal;transform-origin:0.00px 50%;transform:scaleX(0.8712);--w:58;--s:0.8712;"><span style="position:relative;top:0.07em;letter-spacing:0.000px">40m² </span><span style="letter-spacing:-0.650px">이하</span></div>
<div style="position:absolute;left:704.4px;top:234.6px;width:17.2px;height:17.2px;border:1.5px solid #c8cdea;border-radius:3px;background:#fff"></div>
<div style="position:absolute;left:726.00px;top:235.40px;white-space:nowrap;font-size:13px;line-height:17px;color:#444;font-weight:normal;transform-origin:0.00px 50%;transform:scaleX(0.8784);--w:74;--s:0.8784;"><span style="letter-spacing:0.000px">40m² ~ 70m²</span></div>
<div style="position:absolute;left:704.4px;top:260.79999999999995px;width:17.2px;height:17.2px;border:1.5px solid #c8cdea;border-radius:3px;background:#fff"></div>
<div style="position:absolute;left:725.00px;top:261.60px;white-space:nowrap;font-size:13px;line-height:17px;color:#444;font-weight:normal;transform-origin:1.00px 50%;transform:scaleX(0.8987);--w:81;--s:0.8987;"><span style="letter-spacing:0.000px">70m² ~ 100m²</span></div>
<div style="position:absolute;left:704.4px;top:287.0px;width:17.2px;height:17.2px;border:1.5px solid #c8cdea;border-radius:3px;background:#fff"></div>
<div style="position:absolute;left:725.00px;top:287.80px;white-space:nowrap;font-size:13px;line-height:17px;color:#444;font-weight:normal;transform-origin:1.00px 50%;transform:scaleX(0.9046);--w:89;--s:0.9046;"><span style="letter-spacing:0.000px">100m² ~ 130m²</span></div>
<div style="position:absolute;left:704.4px;top:313.2px;width:17.2px;height:17.2px;border:1.5px solid #c8cdea;border-radius:3px;background:#fff"></div>
<div style="position:absolute;left:725.00px;top:313.50px;white-space:nowrap;font-size:13px;line-height:17px;color:#444;font-weight:normal;transform-origin:1.00px 50%;transform:scaleX(0.9046);--w:65;--s:0.9046;"><span style="position:relative;top:0.07em;letter-spacing:0.000px">130m² </span><span style="letter-spacing:-0.650px">이상</span></div>
<div style="position:absolute;left:704.4px;top:339.4px;width:17.2px;height:17.2px;border:1.5px solid #c8cdea;border-radius:3px;background:#fff"></div>
<div style="position:absolute;left:725.00px;top:339.70px;white-space:nowrap;font-size:13px;line-height:17px;color:#444;font-weight:normal;transform-origin:1.00px 50%;transform:scaleX(0.9766);--w:49;--s:0.9766;"><span style="letter-spacing:-0.650px">직접입력</span></div>
<div style="position:absolute;left:726.5px;top:362.4px;width:49.2px;height:32.8px;border:1px solid #dcdcdc;border-radius:4px"></div>
<div style="position:absolute;left:789.4px;top:362.4px;width:50.6px;height:32.8px;border:1px solid #dcdcdc;border-radius:4px"></div>
<div style="position:absolute;left:779.00px;top:373.00px;white-space:nowrap;font-size:10px;line-height:14px;color:#666;font-weight:normal;transform-origin:1.00px 50%;transform:scaleX(1.4500);--w:6;--s:1.4500;"><span style="letter-spacing:0.000px">~</span></div>
<script>
(function(){var L=document.querySelectorAll('div');for(var i=0;i<L.length;i++){var e=L[i];var w=parseFloat(e.style.getPropertyValue('--w'));if(!w)continue;var s=parseFloat(e.style.getPropertyValue('--s'));var a=e.offsetWidth;if(a>0&&Math.abs(a-w)/w>0.04){e.style.transform='scaleX('+(s*w/a).toFixed(4)+')';}}})();
</script>
</body></html>
